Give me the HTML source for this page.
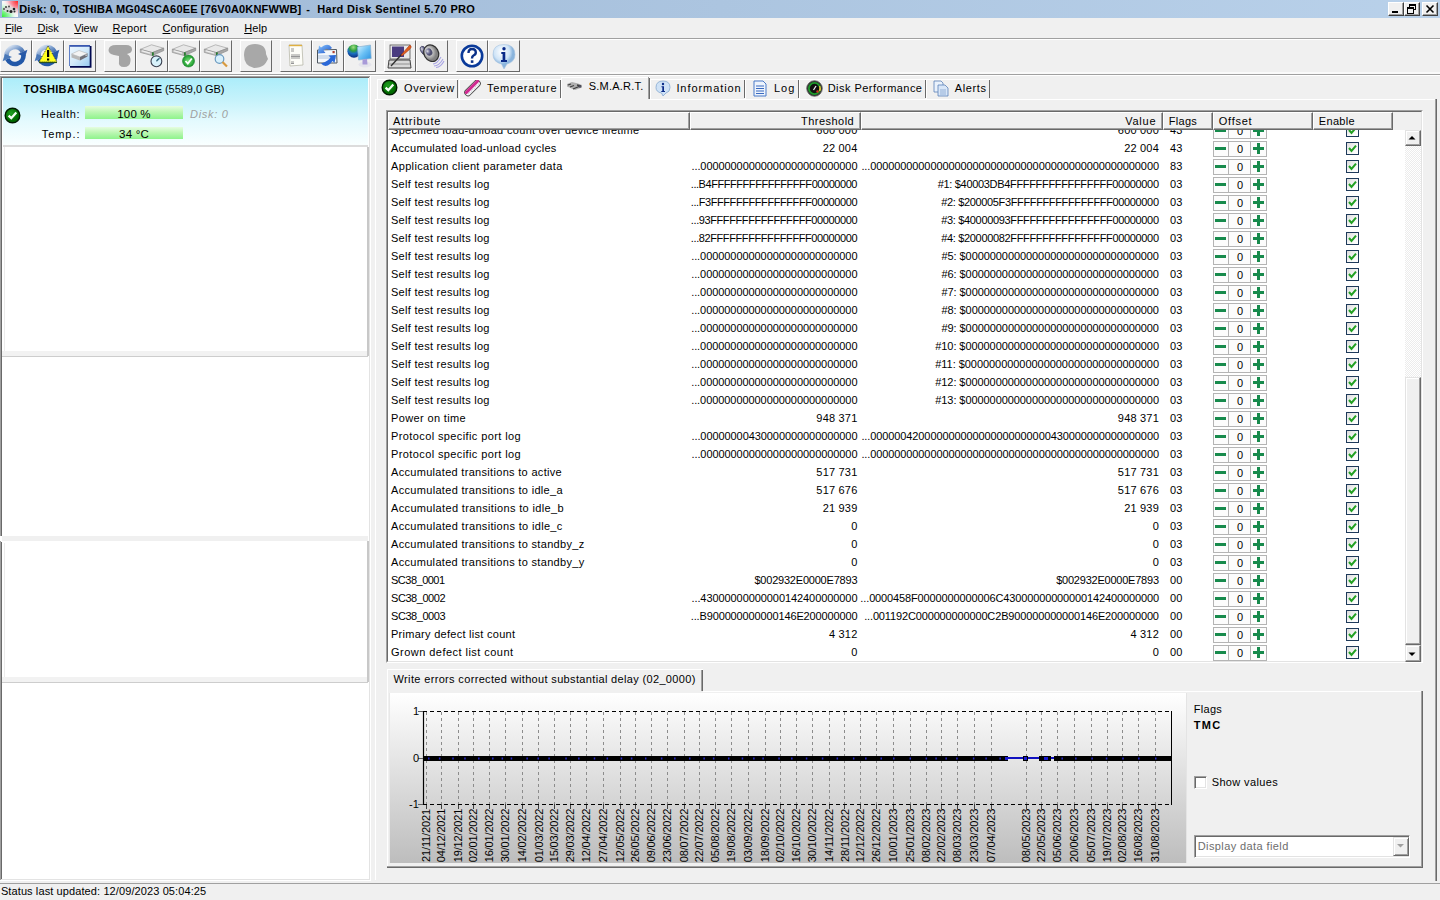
<!DOCTYPE html>
<html><head><meta charset="utf-8">
<style>
*{margin:0;padding:0;box-sizing:border-box}
html,body{width:1440px;height:900px;overflow:hidden;background:#f0f0f0;font-family:"Liberation Sans", sans-serif;font-size:11px;color:#000}
.a{position:absolute}
.t{position:absolute;white-space:nowrap;line-height:13px}
.r{text-align:right}
</style></head><body>

<div class="a" style="left:0;top:0;width:1440px;height:18px;background:linear-gradient(90deg,#9fb9d6,#b9d1ea)"></div>
<svg class="a" style="left:2px;top:1px" width="16" height="16"><defs><radialGradient id="ar" cx="1" cy="0" r="1"><stop offset="0" stop-color="#ff2020"/><stop offset=".5" stop-color="#f8a0b0"/><stop offset="1" stop-color="#fff" stop-opacity="0"/></radialGradient><radialGradient id="ag" cx="0" cy="1" r="1"><stop offset="0" stop-color="#30f030"/><stop offset=".55" stop-color="#b0f4c0"/><stop offset="1" stop-color="#fff" stop-opacity="0"/></radialGradient></defs><rect width="16" height="16" fill="#fafafa"/><rect width="16" height="16" fill="url(#ar)"/><rect width="16" height="16" fill="url(#ag)"/><path d="M1 7 Q4 5 8 6 Q12 6 15.5 8 L14 11 Q10 13 6 12 Q3 11 1 9 Z" fill="#d8d8d8"/><circle cx="4" cy="6" r="1" fill="#404040"/><circle cx="7" cy="5.5" r="1" fill="#505050"/><circle cx="12" cy="8" r="1.3" fill="#202028"/><circle cx="9" cy="10.5" r="1.5" fill="#202020"/><circle cx="5.5" cy="10" r="1" fill="#204020"/><circle cx="12.5" cy="10.5" r="1" fill="#303030"/><circle cx="2" cy="8" r=".9" fill="#404040"/></svg>
<div class="t" style="left:19.2px;top:3px;font-weight:bold;letter-spacing:0.151px">Disk: 0, TOSHIBA MG04SCA60EE [76V0A0KNFWWB]</div>
<div class="t" style="left:306.2px;top:3px;font-weight:bold;letter-spacing:2.328px">-</div>
<div class="t" style="left:317.2px;top:3px;font-weight:bold;letter-spacing:0.353px">Hard Disk Sentinel 5.70 PRO</div>
<div class="a" style="left:1388px;top:2px;width:16px;height:14px;background:#f0f0f0;border-top:1px solid #fff;border-left:1px solid #fff;border-right:1px solid #404040;border-bottom:1px solid #404040;box-shadow:inset -1px -1px 0 #a0a0a0"></div>
<div class="a" style="left:1388px;top:2px;width:16px;height:14px"><div class="a" style="left:4px;top:9px;width:6px;height:2px;background:#000"></div></div>
<div class="a" style="left:1404px;top:2px;width:16px;height:14px;background:#f0f0f0;border-top:1px solid #fff;border-left:1px solid #fff;border-right:1px solid #404040;border-bottom:1px solid #404040;box-shadow:inset -1px -1px 0 #a0a0a0"></div>
<div class="a" style="left:1404px;top:2px;width:16px;height:14px"><div class="a" style="left:5px;top:2px;width:7px;height:6px;border:1px solid #000;border-top-width:2px"></div><div class="a" style="left:3px;top:5px;width:7px;height:7px;border:1px solid #000;border-top-width:2px;background:#f0f0f0"></div></div>
<div class="a" style="left:1422px;top:2px;width:16px;height:14px;background:#f0f0f0;border-top:1px solid #fff;border-left:1px solid #fff;border-right:1px solid #404040;border-bottom:1px solid #404040;box-shadow:inset -1px -1px 0 #a0a0a0"></div>
<div class="a" style="left:1422px;top:2px;width:16px;height:14px"><svg class="a" style="left:0;top:0" width="16" height="14"><path d="M4.5 3.5 L11.5 10.5 M11.5 3.5 L4.5 10.5" stroke="#000" stroke-width="1.6"/></svg></div>
<div class="a" style="left:0;top:18px;width:1440px;height:19px;background:#f0f0f0"></div>
<div class="a" style="left:0;top:38px;width:1440px;height:1px;background:#a0a0a0"></div>
<div class="a" style="left:0;top:39px;width:1440px;height:1px;background:#fff"></div>
<div class="t" style="left:4.9px;top:22px;;letter-spacing:-0.065px"><u>F</u>ile</div>
<div class="t" style="left:37.5px;top:22px;;letter-spacing:-0.021px"><u>D</u>isk</div>
<div class="t" style="left:74.2px;top:22px;;letter-spacing:-0.086px"><u>V</u>iew</div>
<div class="t" style="left:112.5px;top:22px;;letter-spacing:0.197px"><u>R</u>eport</div>
<div class="t" style="left:162.5px;top:22px;;letter-spacing:0.081px"><u>C</u>onfiguration</div>
<div class="t" style="left:244.2px;top:22px;;letter-spacing:0.061px"><u>H</u>elp</div>
<div class="a" style="left:0;top:72px;width:1440px;height:2px;background:#fafafa"></div>
<div class="a" style="left:0;top:74px;width:1440px;height:1px;background:#a0a0a0"></div>
<div class="a" style="left:0;top:75px;width:1440px;height:1px;background:#fff"></div>
<div class="a" style="left:0px;top:40px;width:32px;height:32px;border-top:1px solid #fff;border-left:1px solid #fff;border-right:1px solid #696969;border-bottom:1px solid #696969;background:#f0f0f0"></div>
<div class="a" style="left:32px;top:40px;width:32px;height:32px;border-top:1px solid #fff;border-left:1px solid #fff;border-right:1px solid #696969;border-bottom:1px solid #696969;background:#f0f0f0"></div>
<div class="a" style="left:64px;top:40px;width:32px;height:32px;border-top:1px solid #fff;border-left:1px solid #fff;border-right:1px solid #696969;border-bottom:1px solid #696969;background:#f0f0f0"></div>
<div class="a" style="left:104px;top:40px;width:32px;height:32px;border-top:1px solid #fff;border-left:1px solid #fff;border-right:1px solid #696969;border-bottom:1px solid #696969;background:#f0f0f0"></div>
<div class="a" style="left:136px;top:40px;width:32px;height:32px;border-top:1px solid #fff;border-left:1px solid #fff;border-right:1px solid #696969;border-bottom:1px solid #696969;background:#f0f0f0"></div>
<div class="a" style="left:168px;top:40px;width:32px;height:32px;border-top:1px solid #fff;border-left:1px solid #fff;border-right:1px solid #696969;border-bottom:1px solid #696969;background:#f0f0f0"></div>
<div class="a" style="left:200px;top:40px;width:32px;height:32px;border-top:1px solid #fff;border-left:1px solid #fff;border-right:1px solid #696969;border-bottom:1px solid #696969;background:#f0f0f0"></div>
<div class="a" style="left:240px;top:40px;width:32px;height:32px;border-top:1px solid #fff;border-left:1px solid #fff;border-right:1px solid #696969;border-bottom:1px solid #696969;background:#f0f0f0"></div>
<div class="a" style="left:280px;top:40px;width:32px;height:32px;border-top:1px solid #fff;border-left:1px solid #fff;border-right:1px solid #696969;border-bottom:1px solid #696969;background:#f0f0f0"></div>
<div class="a" style="left:312px;top:40px;width:32px;height:32px;border-top:1px solid #fff;border-left:1px solid #fff;border-right:1px solid #696969;border-bottom:1px solid #696969;background:#f0f0f0"></div>
<div class="a" style="left:344px;top:40px;width:32px;height:32px;border-top:1px solid #fff;border-left:1px solid #fff;border-right:1px solid #696969;border-bottom:1px solid #696969;background:#f0f0f0"></div>
<div class="a" style="left:384px;top:40px;width:32px;height:32px;border-top:1px solid #fff;border-left:1px solid #fff;border-right:1px solid #696969;border-bottom:1px solid #696969;background:#f0f0f0"></div>
<div class="a" style="left:416px;top:40px;width:32px;height:32px;border-top:1px solid #fff;border-left:1px solid #fff;border-right:1px solid #696969;border-bottom:1px solid #696969;background:#f0f0f0"></div>
<div class="a" style="left:456px;top:40px;width:32px;height:32px;border-top:1px solid #fff;border-left:1px solid #fff;border-right:1px solid #696969;border-bottom:1px solid #696969;background:#f0f0f0"></div>
<div class="a" style="left:488px;top:40px;width:32px;height:32px;border-top:1px solid #fff;border-left:1px solid #fff;border-right:1px solid #696969;border-bottom:1px solid #696969;background:#f0f0f0"></div>
<svg class="a" style="left:0px;top:40px" width="32" height="32" viewBox="0 0 32 32"><defs><linearGradient id="rg15" x1="0" y1="0" x2="1" y2="1"><stop offset="0" stop-color="#e4ecf6"/><stop offset=".45" stop-color="#7a9ccc"/><stop offset="1" stop-color="#1a4a98"/></linearGradient></defs><path d="M6.53 16.24 A8.5 8.5 0 0 1 22.70 11.91" stroke="url(#rg15)" stroke-width="4.6" fill="none"/><path d="M27.42 9.71 L25.03 16.89 L17.99 14.11 Z" fill="#2a5aa8"/><path d="M23.47 14.76 A8.5 8.5 0 0 1 7.30 19.09" stroke="#2358a8" stroke-width="4.6" fill="none"/><path d="M2.58 21.29 L4.97 14.11 L12.01 16.89 Z" fill="#4a78b8"/></svg>
<svg class="a" style="left:32px;top:40px" width="32" height="32" viewBox="0 0 32 32"><defs><linearGradient id="rg15" x1="0" y1="0" x2="1" y2="1"><stop offset="0" stop-color="#e4ecf6"/><stop offset=".45" stop-color="#7a9ccc"/><stop offset="1" stop-color="#1a4a98"/></linearGradient></defs><path d="M6.53 16.24 A8.5 8.5 0 0 1 22.70 11.91" stroke="url(#rg15)" stroke-width="4.6" fill="none"/><path d="M27.42 9.71 L25.03 16.89 L17.99 14.11 Z" fill="#2a5aa8"/><path d="M23.47 14.76 A8.5 8.5 0 0 1 7.30 19.09" stroke="#2358a8" stroke-width="4.6" fill="none"/><path d="M2.58 21.29 L4.97 14.11 L12.01 16.89 Z" fill="#4a78b8"/><path d="M16 6 L25 22 L7 22 Z" fill="#ffff20" stroke="#202020" stroke-width=".8" stroke-dasharray="1,1"/>
<rect x="15" y="10" width="2.2" height="7" fill="#000"/><rect x="15" y="18.5" width="2.2" height="2" fill="#000"/><path d="M7 22.5 L25 22.5" stroke="#2a5020" stroke-width="1.2"/></svg>
<svg class="a" style="left:64px;top:40px" width="32" height="32" viewBox="0 0 32 32"><defs><linearGradient id="bx" x1="0" y1="0" x2="1" y2="1"><stop offset="0" stop-color="#f0f8ff"/><stop offset=".5" stop-color="#d4ebfb"/><stop offset="1" stop-color="#94c8f0"/></linearGradient></defs>
<rect x="5" y="5" width="21.5" height="21.5" fill="url(#bx)"/>
<rect x="5" y="5" width="21" height="1.8" fill="#3a58b0"/><rect x="5" y="5" width="1" height="21" fill="#6080c8"/>
<path d="M26.6 6 L26.6 26.8 L6 26.8" stroke="#000850" stroke-width="1.8" fill="none"/>
<path d="M7.5 14 L15 10.5 L23.5 13.5 L16 17 Z" fill="#f4f4f4" stroke="#a8a8a8" stroke-width=".5"/>
<path d="M7.5 14 L16 17 L16 20.5 L7.5 17.5 Z" fill="#b8b8b8"/>
<path d="M16 17 L23.5 13.5 L23.5 16.5 L16 20.5 Z" fill="#707078"/><rect x="21.5" y="14.5" width="1.2" height="1.5" fill="#e0e0e0"/></svg>
<svg class="a" style="left:104px;top:40px" width="32" height="32" viewBox="0 0 32 32"><path d="M4.5 10 Q5 5 12 5 L22 5 Q28 5 28 9.5 Q28 13 23 14 Q27 16 26.5 21 Q26 27 20 27 Q14 27 15 21 L15 16 L10 15 Q4.5 14 4.5 10 Z" fill="#a4a4a4"/></svg>
<svg class="a" style="left:136px;top:40px" width="32" height="32" viewBox="0 0 32 32"><path d="M4.3 9.3 L15.5 4.8 L27.7 8.2 L16.3 12.6 Z" fill="#e8e8e8" stroke="#a0a0a0" stroke-width=".7"/>
<path d="M4.3 9.3 L16.3 12.6 L16.3 15.6 L4.3 12.4 Z" fill="#c4c4c4" stroke="#909090" stroke-width=".7"/>
<path d="M6 10.9 L14 13.1" stroke="#eeeeee" stroke-width="1.1"/>
<path d="M16.3 12.6 L27.7 8.2 L27.7 10.6 L16.3 15.6 Z" fill="#a8a8a8" stroke="#888" stroke-width=".7"/>
<rect x="16" y="12.3" width="1.8" height="3.4" fill="#2a7a30"/><circle cx="20.4" cy="21.3" r="5.4" fill="#d8f2fb" stroke="#3a4050" stroke-width="1.1"/><path d="M20.4 21.3 L23.5 18.3 L21 20" stroke="#3a6a80" stroke-width="1.3" fill="none"/></svg>
<svg class="a" style="left:168px;top:40px" width="32" height="32" viewBox="0 0 32 32"><path d="M4.3 9.3 L15.5 4.8 L27.7 8.2 L16.3 12.6 Z" fill="#e8e8e8" stroke="#a0a0a0" stroke-width=".7"/>
<path d="M4.3 9.3 L16.3 12.6 L16.3 15.6 L4.3 12.4 Z" fill="#c4c4c4" stroke="#909090" stroke-width=".7"/>
<path d="M6 10.9 L14 13.1" stroke="#eeeeee" stroke-width="1.1"/>
<path d="M16.3 12.6 L27.7 8.2 L27.7 10.6 L16.3 15.6 Z" fill="#a8a8a8" stroke="#888" stroke-width=".7"/>
<rect x="16" y="12.3" width="1.8" height="3.4" fill="#2a7a30"/><defs><radialGradient id="gc"><stop offset="0" stop-color="#7ce07c"/><stop offset="1" stop-color="#1a9a2a"/></radialGradient></defs><circle cx="20.5" cy="21" r="6" fill="url(#gc)" stroke="#1a7a2a" stroke-width=".6"/><path d="M17.5 21 L19.8 23.5 L23.8 18.5" stroke="#fff" stroke-width="1.8" fill="none"/></svg>
<svg class="a" style="left:200px;top:40px" width="32" height="32" viewBox="0 0 32 32"><path d="M4.3 9.3 L15.5 4.8 L27.7 8.2 L16.3 12.6 Z" fill="#e8e8e8" stroke="#a0a0a0" stroke-width=".7"/>
<path d="M4.3 9.3 L16.3 12.6 L16.3 15.6 L4.3 12.4 Z" fill="#c4c4c4" stroke="#909090" stroke-width=".7"/>
<path d="M6 10.9 L14 13.1" stroke="#eeeeee" stroke-width="1.1"/>
<path d="M16.3 12.6 L27.7 8.2 L27.7 10.6 L16.3 15.6 Z" fill="#a8a8a8" stroke="#888" stroke-width=".7"/>
<rect x="16" y="12.3" width="1.8" height="3.4" fill="#2a7a30"/><circle cx="19.5" cy="19" r="4.3" fill="#d8f0fc" stroke="#6a9ac0" stroke-width="1.2"/><path d="M22.5 22 L27 26.5" stroke="#d89a40" stroke-width="2.2"/></svg>
<svg class="a" style="left:240px;top:40px" width="32" height="32" viewBox="0 0 32 32"><path d="M4 15 Q4 4 15 4 Q26 4 26 14 L28 19 Q26 23 24 25 Q20 28 14 28 Q4 26 4 15 Z" fill="#a8a8a8"/></svg>
<svg class="a" style="left:280px;top:40px" width="32" height="32" viewBox="0 0 32 32"><path d="M9 5 L22 5 L23 25 L10 26 Z" fill="#fdfdf8" stroke="#b0b0a0" stroke-width=".7"/><path d="M9 5.5 L22 5.5" stroke="#e0b040" stroke-width="1.4"/>
<path d="M11 9 L14 9 M11 11 L14 11 M11 15 L20 15 M11 16.5 L20 16.5 M11 18 L20 18 M11 22 L14 22 M11 23.5 L14 23.5" stroke="#8a8a8a" stroke-width=".9"/></svg>
<svg class="a" style="left:312px;top:40px" width="32" height="32" viewBox="0 0 32 32"><defs><linearGradient id="ma" x1="0" y1="0" x2="1" y2="1"><stop offset="0" stop-color="#8ac8ff"/><stop offset="1" stop-color="#1a50c8"/></linearGradient></defs>
<path d="M5.5 10 L24.5 9.5 L25 23 L5.5 23 Z" fill="#f4f8fc" stroke="#505860" stroke-width="1"/><path d="M6 17 L24 17" stroke="#d0dcec" stroke-width="4"/>
<rect x="20.5" y="11" width="2.2" height="2.2" fill="#b04030"/>
<path d="M20 8 Q17 3 12 5.5 L9 7.5 L7 5.5 L6 13.5 L13.5 13 L11.5 10.5 Q15 8 17 10 Z" fill="url(#ma)"/>
<path d="M9 23.5 Q13 28 18 24 L20.5 21 L22.5 23 L24 15 L16.5 15.5 L18.5 17.5 Q16 21 13 22 Z" fill="#2a68d8"/></svg>
<svg class="a" style="left:344px;top:40px" width="32" height="32" viewBox="0 0 32 32"><defs><radialGradient id="gl" cx=".45" cy=".2" r=".8"><stop offset="0" stop-color="#a0e080"/><stop offset=".35" stop-color="#30a040"/><stop offset=".6" stop-color="#1a70c0"/><stop offset="1" stop-color="#0a2a80"/></radialGradient><linearGradient id="mn" x1="0" y1="0" x2="1" y2="1"><stop offset="0" stop-color="#d8f4ff"/><stop offset=".5" stop-color="#6ac0f4"/><stop offset="1" stop-color="#2a90e0"/></linearGradient></defs>
<circle cx="10" cy="11.2" r="6.6" fill="url(#gl)"/>
<path d="M13.5 7 L26.5 5 L27.2 18.5 L14.5 20 Z" fill="url(#mn)" stroke="#8ab0d0" stroke-width=".7"/>
<ellipse cx="21" cy="24.5" rx="6.5" ry="3" fill="#e4e4ec"/><path d="M18.5 19.5 L23 19 L23.5 24.5 L18.5 24.5 Z" fill="#a89ad8"/></svg>
<svg class="a" style="left:384px;top:40px" width="32" height="32" viewBox="0 0 32 32"><rect x="6" y="5" width="20" height="14" fill="#e8e8e8" stroke="#505050" stroke-width=".8"/><rect x="8" y="6.5" width="12" height="10.5" fill="#4a3c80"/>
<path d="M5 20 L26 20 L27 28 L4 28 Z" fill="#d8d8d8" stroke="#303030" stroke-width=".9"/><path d="M5 24 L26 24" stroke="#808080" stroke-width=".8"/>
<path d="M7 26 L18 14" stroke="#303030" stroke-width="1.3"/><path d="M17 15 L24 7 Q26 4 27 6 Q28 7 25 10 L18 16 Z" fill="#e06020" stroke="#a03010" stroke-width=".5"/></svg>
<svg class="a" style="left:416px;top:40px" width="32" height="32" viewBox="0 0 32 32"><defs><radialGradient id="sp" cx=".4" cy=".35"><stop offset="0" stop-color="#f4f4f4"/><stop offset=".6" stop-color="#b8b8b8"/><stop offset="1" stop-color="#808080"/></radialGradient><radialGradient id="sp2" cx=".35" cy=".3"><stop offset="0" stop-color="#e0e0e0"/><stop offset=".6" stop-color="#7a7aa0"/><stop offset="1" stop-color="#505070"/></radialGradient></defs>
<ellipse cx="7.3" cy="10.3" rx="2.6" ry="4.3" transform="rotate(-25 7.3 10.3)" fill="url(#sp2)" stroke="#404060" stroke-width=".7"/>
<path d="M17 24 Q21 24 25 17 M18 26 Q23 26 27 19 M20 27.5 Q25 27 28 21" stroke="#a8a4e4" stroke-width="1.1" fill="none"/>
<ellipse cx="15.2" cy="13.2" rx="7.2" ry="8.6" transform="rotate(-30 15.2 13.2)" fill="url(#sp)" stroke="#303030" stroke-width="1.2"/>
<ellipse cx="13" cy="12" rx="3.2" ry="3.8" transform="rotate(-30 13 12)" fill="url(#sp2)"/></svg>
<svg class="a" style="left:456px;top:40px" width="32" height="32" viewBox="0 0 32 32"><circle cx="16" cy="16" r="10.2" fill="#fff" stroke="#0a3a9a" stroke-width="2.6"/>
<path d="M12.5 13 Q12.5 9 16 9 Q19.8 9 19.8 12.5 Q19.8 14.5 17.5 15.5 Q16 16.3 16 18.5" stroke="#0a3088" stroke-width="2.4" fill="none"/><rect x="14.8" y="20.3" width="2.6" height="2.6" fill="#0a3088"/></svg>
<svg class="a" style="left:488px;top:40px" width="32" height="32" viewBox="0 0 32 32"><defs><radialGradient id="bb" cx=".4" cy=".3"><stop offset="0" stop-color="#fff"/><stop offset=".7" stop-color="#cfe4f7"/><stop offset="1" stop-color="#8ab4dc"/></radialGradient></defs>
<path d="M16 4.5 Q27 4.5 27 14.5 Q27 22 19 24 L16 29 L13.5 24 Q5 22 5 14.5 Q5 4.5 16 4.5 Z" fill="url(#bb)" stroke="#a8c4e0" stroke-width=".6"/>
<circle cx="16" cy="8.8" r="1.7" fill="#0a2a88"/><path d="M13.3 12 L17.3 12 L17.3 20 L19 20 L19 22 L13 22 L13 20 L14.6 20 L14.6 14 L13.3 14 Z" fill="#0a2a88"/></svg>
<div class="a" style="left:0;top:76px;width:370px;height:803px;background:#fff"></div>
<div class="a" style="left:0;top:76px;width:1px;height:460px;background:#a0a0a0"></div>
<div class="a" style="left:1px;top:77px;width:1px;height:459px;background:#696969"></div>
<div class="a" style="left:0;top:541px;width:1px;height:339px;background:#a0a0a0"></div>
<div class="a" style="left:1px;top:542px;width:1px;height:338px;background:#696969"></div>
<div class="a" style="left:0;top:76px;width:370px;height:1px;background:#a0a0a0"></div>
<div class="a" style="left:1px;top:77px;width:368px;height:1px;background:#696969"></div>
<div class="a" style="left:369px;top:77px;width:1px;height:803px;background:#e3e3e3"></div>
<div class="a" style="left:370px;top:76px;width:1px;height:805px;background:#fff"></div>
<div class="a" style="left:1px;top:879px;width:369px;height:1px;background:#e3e3e3"></div>
<div class="a" style="left:0px;top:880px;width:371px;height:1px;background:#fff"></div>
<div class="a" style="left:3px;top:78px;width:365px;height:67px;background:linear-gradient(180deg,#acedfa 0%,#c8f3fb 35%,#e4fafe 65%,#f9ffff 100%)"></div>
<div class="a" style="left:3px;top:145px;width:365px;height:2px;background:#dcdcdc"></div>
<div class="t" style="left:23.4px;top:83px;font-weight:bold;letter-spacing:0.364px">TOSHIBA MG04SCA60EE</div>
<div class="t" style="left:165.0px;top:83px;;letter-spacing:-0.042px">(5589,0 GB)</div>
<svg class="a" style="left:4px;top:107px" width="17" height="17" viewBox="0 0 17 17"><defs><radialGradient id="ck0" cx=".4" cy=".35"><stop offset="0" stop-color="#20a020"/><stop offset="1" stop-color="#006a00"/></radialGradient></defs>
<circle cx="8.5" cy="8.5" r="7.3" fill="url(#ck0)" stroke="#001a00" stroke-width="1.4"/><path d="M4.6 8.6 L7.3 11.2 L12.3 5.6" stroke="#f4fff4" stroke-width="2.3" fill="none"/></svg>
<div class="t" style="left:40.9px;top:108px;;letter-spacing:0.623px">Health:</div>
<div class="t" style="left:41.7px;top:128px;;letter-spacing:0.957px">Temp.:</div>
<div class="a" style="left:85px;top:106px;width:98px;height:13px;background:linear-gradient(180deg,#e6fde0 0%,#bdf7b4 45%,#8ef38c 100%)"></div>
<div class="a" style="left:85px;top:127px;width:98px;height:12px;background:linear-gradient(180deg,#e6fde0 0%,#bdf7b4 45%,#8ef38c 100%)"></div>
<div class="t" style="left:85px;top:108px;width:98px;text-align:center;letter-spacing:0.2px;font-size:11.5px">100 %</div>
<div class="t" style="left:85px;top:128px;width:98px;text-align:center;letter-spacing:0.2px;font-size:11.5px">34 °C</div>
<div class="t" style="left:190.0px;top:108px;font-style:italic;color:#a0a0a0;letter-spacing:0.712px">Disk: 0</div>
<div class="a" style="left:2px;top:351px;width:366px;height:5px;background:#f2f2f2"></div>
<div class="a" style="left:2px;top:356px;width:366px;height:1px;background:#cdcdcd"></div>
<div class="a" style="left:2px;top:536px;width:366px;height:5px;background:#f0f0f0"></div>
<div class="a" style="left:2px;top:677px;width:366px;height:5px;background:#f2f2f2"></div>
<div class="a" style="left:2px;top:682px;width:366px;height:1px;background:#cdcdcd"></div>
<div class="a" style="left:4px;top:147px;width:1px;height:204px;background:#ececec"></div>
<div class="a" style="left:4px;top:543px;width:1px;height:134px;background:#ececec"></div>
<div class="a" style="left:367px;top:147px;width:2px;height:209px;background:#c8c8c8"></div>
<div class="a" style="left:367px;top:541px;width:2px;height:141px;background:#c8c8c8"></div>
<div class="a" style="left:375px;top:99px;width:1px;height:781px;background:#fff"></div>
<div class="a" style="left:375px;top:99px;width:1061px;height:1px;background:#fff"></div>
<div class="a" style="left:1436px;top:99px;width:1px;height:782px;background:#696969"></div>
<div class="a" style="left:1435px;top:99px;width:1px;height:782px;background:#a0a0a0"></div>
<div class="a" style="left:0;top:883px;width:1440px;height:1px;background:#a0a0a0"></div>
<div class="a" style="left:0;top:884px;width:1440px;height:16px;background:#f0f0f0"></div>
<div class="t" style="left:0.9px;top:885px;;letter-spacing:0.105px">Status last updated: 12/09/2023 05:04:25</div>
<div class="a" style="left:377px;top:79px;width:81px;height:20px;border-top:1px solid #fff;border-left:1px solid #fff"></div>
<div class="a" style="left:457px;top:80px;width:1px;height:18px;background:#696969"></div>
<div class="t" style="left:404.0px;top:82px;;letter-spacing:0.608px">Overview</div>
<div class="a" style="left:459px;top:79px;width:102px;height:20px;border-top:1px solid #fff;border-left:1px solid #fff"></div>
<div class="a" style="left:560px;top:80px;width:1px;height:18px;background:#696969"></div>
<div class="t" style="left:486.9px;top:82px;;letter-spacing:0.793px">Temperature</div>
<div class="a" style="left:561px;top:77px;width:89px;height:23px;background:#f0f0f0;border-top:1px solid #fff;border-left:1px solid #fff"></div>
<div class="a" style="left:648px;top:77px;width:1px;height:22px;background:#a0a0a0"></div>
<div class="a" style="left:649px;top:78px;width:1px;height:21px;background:#696969"></div>
<div class="t" style="left:588.7px;top:80px;;letter-spacing:0.238px">S.M.A.R.T.</div>
<div class="a" style="left:650px;top:79px;width:95px;height:20px;border-top:1px solid #fff;border-left:1px solid #fff"></div>
<div class="a" style="left:744px;top:80px;width:1px;height:18px;background:#696969"></div>
<div class="t" style="left:676.4px;top:82px;;letter-spacing:0.927px">Information</div>
<div class="a" style="left:745px;top:79px;width:54px;height:20px;border-top:1px solid #fff;border-left:1px solid #fff"></div>
<div class="a" style="left:798px;top:80px;width:1px;height:18px;background:#696969"></div>
<div class="t" style="left:773.9px;top:82px;;letter-spacing:1.070px">Log</div>
<div class="a" style="left:799px;top:79px;width:127px;height:20px;border-top:1px solid #fff;border-left:1px solid #fff"></div>
<div class="a" style="left:925px;top:80px;width:1px;height:18px;background:#696969"></div>
<div class="t" style="left:827.7px;top:82px;;letter-spacing:0.459px">Disk Performance</div>
<div class="a" style="left:926px;top:79px;width:64px;height:20px;border-top:1px solid #fff;border-left:1px solid #fff"></div>
<div class="a" style="left:989px;top:80px;width:1px;height:18px;background:#696969"></div>
<div class="t" style="left:954.8px;top:82px;;letter-spacing:0.595px">Alerts</div>
<svg class="a" style="left:381px;top:79px" width="17" height="17" viewBox="0 0 17 17"><defs><radialGradient id="ck1" cx=".4" cy=".35"><stop offset="0" stop-color="#20a020"/><stop offset="1" stop-color="#006a00"/></radialGradient></defs>
<circle cx="8.5" cy="8.5" r="7.3" fill="url(#ck1)" stroke="#001a00" stroke-width="1.4"/><path d="M4.6 8.6 L7.3 11.2 L12.3 5.6" stroke="#f4fff4" stroke-width="2.3" fill="none"/></svg>
<svg class="a" style="left:464px;top:80px" width="17" height="17"><g transform="rotate(-45 8.5 8)"><rect x="-1" y="4.8" width="19" height="6.4" rx="2.8" fill="#fff" stroke="#505050" stroke-width="1"/><rect x="-0.5" y="5.3" width="19" height="3" rx="1.3" fill="#d02a90"/><path d="M1 9.3 L17 9.3" stroke="#b8b8c8" stroke-width="1" stroke-dasharray="1,1"/></g></svg>
<svg class="a" style="left:566px;top:81px" width="18" height="10"><path d="M1 3 L6 1 L12 2.5 L16 4 L16 6.5 L9 9 L1 5.5 Z" fill="#b0b0b0"/><path d="M2 4 L5 3 M4 6 L8 4.5 M7 8 L13 5.5 M11 4 L15 5" stroke="#404040" stroke-width="1.3"/><circle cx="14" cy="5.5" r="1.3" fill="#505060"/></svg>
<svg class="a" style="left:655px;top:80px" width="17" height="17"><path d="M8 1 Q15 1 15 7.5 Q15 12 11 13 L8 16 L6.5 13 Q1 12 1 7.5 Q1 1 8 1 Z" fill="#cfe2f6" stroke="#7aa0cc" stroke-width=".7"/><circle cx="8" cy="4" r="1.2" fill="#0a2a88"/><path d="M6.5 6.2 L9 6.2 L9 11 L10 11 L10 12 L6.3 12 L6.3 11 L7.3 11 L7.3 7.2 L6.5 7.2 Z" fill="#0a2a88"/></svg>
<svg class="a" style="left:752px;top:80px" width="16" height="17"><path d="M2 1 L11 1 L14 4 L14 16 L2 16 Z" fill="#eef4fc" stroke="#4a7ac8" stroke-width="1"/><path d="M4 6 L12 6 M4 8.5 L12 8.5 M4 11 L12 11 M4 13.5 L12 13.5" stroke="#3a6ac0" stroke-width="1"/></svg>
<svg class="a" style="left:806px;top:80px" width="17" height="17"><circle cx="8.5" cy="8.5" r="7.8" fill="#303030" stroke="#606060" stroke-width=".8"/><circle cx="8.5" cy="8.5" r="5.6" fill="#101010" stroke="#1c9a2a" stroke-width="1.8"/><path d="M13.6 6 A5.6 5.6 0 0 1 13.6 11" stroke="#e0c030" stroke-width="1.6" fill="none"/><path d="M7.5 10 L10 6" stroke="#f0f0f0" stroke-width="1.3"/><circle cx="11.5" cy="11.5" r="1.2" fill="#d03020"/></svg>
<svg class="a" style="left:933px;top:80px" width="16" height="17"><path d="M1 1 L8 1 L10 3 L10 12 L1 12 Z" fill="#eaf2fc" stroke="#5a80b8" stroke-width=".8"/><path d="M5 5 L12 5 L15 8 L15 16 L5 16 Z" fill="#d8e6f8" stroke="#5a80b8" stroke-width=".8"/><path d="M7 10 L13 10 M7 12 L13 12 M7 14 L13 14" stroke="#7a9ac8" stroke-width=".7"/></svg>
<div class="a" style="left:386px;top:110px;width:1037px;height:553px;background:#fff;border-top:1px solid #a0a0a0;border-left:1px solid #a0a0a0;border-right:1px solid #fff;border-bottom:1px solid #fff"></div>
<div class="a" style="left:387px;top:111px;width:1035px;height:551px;border-top:1px solid #696969;border-left:1px solid #696969;border-right:1px solid #e3e3e3;border-bottom:1px solid #e3e3e3"></div>
<div class="a" style="left:388px;top:129px;width:1017px;height:532px;overflow:hidden">
<div class="t" style="left:3.0px;top:-5px;letter-spacing:0.322px">Specified load-unload count over device lifetime</div>
<div class="t r" style="right:547.5px;top:-5px;letter-spacing:0.2px">600 000</div>
<div class="t r" style="right:246.0px;top:-5px;letter-spacing:0.2px">600 000</div>
<div class="t" style="left:782px;top:-5px;letter-spacing:0.2px">43</div>
<div class="a" style="left:825px;top:-6px;width:54px;height:16px;border:1px solid #b4b4b4;background:#fcfcfc"></div>
<div class="a" style="left:840px;top:-6px;width:1px;height:16px;background:#b4b4b4"></div>
<div class="a" style="left:862px;top:-6px;width:1px;height:16px;background:#b4b4b4"></div>
<div class="a" style="left:827px;top:0px;width:11px;height:3px;background:#178a4c"></div>
<div class="a" style="left:865px;top:0px;width:11px;height:3px;background:#178a4c"></div>
<div class="a" style="left:869px;top:-4px;width:3px;height:11px;background:#178a4c"></div>
<div class="t" style="left:841.5px;top:-4px;width:21px;text-align:center">0</div>
<div class="a" style="left:958px;top:-5px;width:13px;height:13px;border:1px solid #1e3a5a;background:linear-gradient(135deg,#dcdcdc,#f8f8f8 60%,#fff)"></div>
<svg class="a" style="left:958px;top:-5px" width="13" height="13"><path d="M3 6 L5.5 9 L10 3.6" stroke="#22a022" stroke-width="2" fill="none"/></svg>
<div class="t" style="left:3.0px;top:13px;letter-spacing:0.260px">Accumulated load-unload cycles</div>
<div class="t r" style="right:547.5px;top:13px;letter-spacing:0.2px">22 004</div>
<div class="t r" style="right:246.0px;top:13px;letter-spacing:0.2px">22 004</div>
<div class="t" style="left:782px;top:13px;letter-spacing:0.2px">43</div>
<div class="a" style="left:825px;top:12px;width:54px;height:16px;border:1px solid #b4b4b4;background:#fcfcfc"></div>
<div class="a" style="left:840px;top:12px;width:1px;height:16px;background:#b4b4b4"></div>
<div class="a" style="left:862px;top:12px;width:1px;height:16px;background:#b4b4b4"></div>
<div class="a" style="left:827px;top:18px;width:11px;height:3px;background:#178a4c"></div>
<div class="a" style="left:865px;top:18px;width:11px;height:3px;background:#178a4c"></div>
<div class="a" style="left:869px;top:14px;width:3px;height:11px;background:#178a4c"></div>
<div class="t" style="left:841.5px;top:14px;width:21px;text-align:center">0</div>
<div class="a" style="left:958px;top:13px;width:13px;height:13px;border:1px solid #1e3a5a;background:linear-gradient(135deg,#dcdcdc,#f8f8f8 60%,#fff)"></div>
<svg class="a" style="left:958px;top:13px" width="13" height="13"><path d="M3 6 L5.5 9 L10 3.6" stroke="#22a022" stroke-width="2" fill="none"/></svg>
<div class="t" style="left:3.0px;top:31px;letter-spacing:0.346px">Application client parameter data</div>
<div class="t r" style="right:547.58px;top:31px;letter-spacing:-0.077px">...00000000000000000000000000</div>
<div class="t r" style="right:246.10px;top:31px;letter-spacing:-0.104px">...000000000000000000000000000000000000000000000000</div>
<div class="t" style="left:782px;top:31px;letter-spacing:0.2px">83</div>
<div class="a" style="left:825px;top:30px;width:54px;height:16px;border:1px solid #b4b4b4;background:#fcfcfc"></div>
<div class="a" style="left:840px;top:30px;width:1px;height:16px;background:#b4b4b4"></div>
<div class="a" style="left:862px;top:30px;width:1px;height:16px;background:#b4b4b4"></div>
<div class="a" style="left:827px;top:36px;width:11px;height:3px;background:#178a4c"></div>
<div class="a" style="left:865px;top:36px;width:11px;height:3px;background:#178a4c"></div>
<div class="a" style="left:869px;top:32px;width:3px;height:11px;background:#178a4c"></div>
<div class="t" style="left:841.5px;top:32px;width:21px;text-align:center">0</div>
<div class="a" style="left:958px;top:31px;width:13px;height:13px;border:1px solid #1e3a5a;background:linear-gradient(135deg,#dcdcdc,#f8f8f8 60%,#fff)"></div>
<svg class="a" style="left:958px;top:31px" width="13" height="13"><path d="M3 6 L5.5 9 L10 3.6" stroke="#22a022" stroke-width="2" fill="none"/></svg>
<div class="t" style="left:3.0px;top:49px;letter-spacing:0.278px">Self test results log</div>
<div class="t r" style="right:547.94px;top:49px;letter-spacing:-0.441px">...B4FFFFFFFFFFFFFFFF00000000</div>
<div class="t r" style="right:246.32px;top:49px;letter-spacing:-0.324px">#1: $40003DB4FFFFFFFFFFFFFFFF00000000</div>
<div class="t" style="left:782px;top:49px;letter-spacing:0.2px">03</div>
<div class="a" style="left:825px;top:48px;width:54px;height:16px;border:1px solid #b4b4b4;background:#fcfcfc"></div>
<div class="a" style="left:840px;top:48px;width:1px;height:16px;background:#b4b4b4"></div>
<div class="a" style="left:862px;top:48px;width:1px;height:16px;background:#b4b4b4"></div>
<div class="a" style="left:827px;top:54px;width:11px;height:3px;background:#178a4c"></div>
<div class="a" style="left:865px;top:54px;width:11px;height:3px;background:#178a4c"></div>
<div class="a" style="left:869px;top:50px;width:3px;height:11px;background:#178a4c"></div>
<div class="t" style="left:841.5px;top:50px;width:21px;text-align:center">0</div>
<div class="a" style="left:958px;top:49px;width:13px;height:13px;border:1px solid #1e3a5a;background:linear-gradient(135deg,#dcdcdc,#f8f8f8 60%,#fff)"></div>
<svg class="a" style="left:958px;top:49px" width="13" height="13"><path d="M3 6 L5.5 9 L10 3.6" stroke="#22a022" stroke-width="2" fill="none"/></svg>
<div class="t" style="left:3.0px;top:67px;letter-spacing:0.278px">Self test results log</div>
<div class="t r" style="right:547.92px;top:67px;letter-spacing:-0.420px">...F3FFFFFFFFFFFFFFFF00000000</div>
<div class="t r" style="right:246.35px;top:67px;letter-spacing:-0.353px">#2: $200005F3FFFFFFFFFFFFFFFF00000000</div>
<div class="t" style="left:782px;top:67px;letter-spacing:0.2px">03</div>
<div class="a" style="left:825px;top:66px;width:54px;height:16px;border:1px solid #b4b4b4;background:#fcfcfc"></div>
<div class="a" style="left:840px;top:66px;width:1px;height:16px;background:#b4b4b4"></div>
<div class="a" style="left:862px;top:66px;width:1px;height:16px;background:#b4b4b4"></div>
<div class="a" style="left:827px;top:72px;width:11px;height:3px;background:#178a4c"></div>
<div class="a" style="left:865px;top:72px;width:11px;height:3px;background:#178a4c"></div>
<div class="a" style="left:869px;top:68px;width:3px;height:11px;background:#178a4c"></div>
<div class="t" style="left:841.5px;top:68px;width:21px;text-align:center">0</div>
<div class="a" style="left:958px;top:67px;width:13px;height:13px;border:1px solid #1e3a5a;background:linear-gradient(135deg,#dcdcdc,#f8f8f8 60%,#fff)"></div>
<svg class="a" style="left:958px;top:67px" width="13" height="13"><path d="M3 6 L5.5 9 L10 3.6" stroke="#22a022" stroke-width="2" fill="none"/></svg>
<div class="t" style="left:3.0px;top:85px;letter-spacing:0.278px">Self test results log</div>
<div class="t r" style="right:547.90px;top:85px;letter-spacing:-0.399px">...93FFFFFFFFFFFFFFFF00000000</div>
<div class="t r" style="right:246.34px;top:85px;letter-spacing:-0.337px">#3: $40000093FFFFFFFFFFFFFFFF00000000</div>
<div class="t" style="left:782px;top:85px;letter-spacing:0.2px">03</div>
<div class="a" style="left:825px;top:84px;width:54px;height:16px;border:1px solid #b4b4b4;background:#fcfcfc"></div>
<div class="a" style="left:840px;top:84px;width:1px;height:16px;background:#b4b4b4"></div>
<div class="a" style="left:862px;top:84px;width:1px;height:16px;background:#b4b4b4"></div>
<div class="a" style="left:827px;top:90px;width:11px;height:3px;background:#178a4c"></div>
<div class="a" style="left:865px;top:90px;width:11px;height:3px;background:#178a4c"></div>
<div class="a" style="left:869px;top:86px;width:3px;height:11px;background:#178a4c"></div>
<div class="t" style="left:841.5px;top:86px;width:21px;text-align:center">0</div>
<div class="a" style="left:958px;top:85px;width:13px;height:13px;border:1px solid #1e3a5a;background:linear-gradient(135deg,#dcdcdc,#f8f8f8 60%,#fff)"></div>
<svg class="a" style="left:958px;top:85px" width="13" height="13"><path d="M3 6 L5.5 9 L10 3.6" stroke="#22a022" stroke-width="2" fill="none"/></svg>
<div class="t" style="left:3.0px;top:103px;letter-spacing:0.278px">Self test results log</div>
<div class="t r" style="right:547.90px;top:103px;letter-spacing:-0.399px">...82FFFFFFFFFFFFFFFF00000000</div>
<div class="t r" style="right:246.34px;top:103px;letter-spacing:-0.337px">#4: $20000082FFFFFFFFFFFFFFFF00000000</div>
<div class="t" style="left:782px;top:103px;letter-spacing:0.2px">03</div>
<div class="a" style="left:825px;top:102px;width:54px;height:16px;border:1px solid #b4b4b4;background:#fcfcfc"></div>
<div class="a" style="left:840px;top:102px;width:1px;height:16px;background:#b4b4b4"></div>
<div class="a" style="left:862px;top:102px;width:1px;height:16px;background:#b4b4b4"></div>
<div class="a" style="left:827px;top:108px;width:11px;height:3px;background:#178a4c"></div>
<div class="a" style="left:865px;top:108px;width:11px;height:3px;background:#178a4c"></div>
<div class="a" style="left:869px;top:104px;width:3px;height:11px;background:#178a4c"></div>
<div class="t" style="left:841.5px;top:104px;width:21px;text-align:center">0</div>
<div class="a" style="left:958px;top:103px;width:13px;height:13px;border:1px solid #1e3a5a;background:linear-gradient(135deg,#dcdcdc,#f8f8f8 60%,#fff)"></div>
<svg class="a" style="left:958px;top:103px" width="13" height="13"><path d="M3 6 L5.5 9 L10 3.6" stroke="#22a022" stroke-width="2" fill="none"/></svg>
<div class="t" style="left:3.0px;top:121px;letter-spacing:0.278px">Self test results log</div>
<div class="t r" style="right:547.57px;top:121px;letter-spacing:-0.067px">...00000000000000000000000000</div>
<div class="t r" style="right:246.08px;top:121px;letter-spacing:-0.077px">#5: $00000000000000000000000000000000</div>
<div class="t" style="left:782px;top:121px;letter-spacing:0.2px">03</div>
<div class="a" style="left:825px;top:120px;width:54px;height:16px;border:1px solid #b4b4b4;background:#fcfcfc"></div>
<div class="a" style="left:840px;top:120px;width:1px;height:16px;background:#b4b4b4"></div>
<div class="a" style="left:862px;top:120px;width:1px;height:16px;background:#b4b4b4"></div>
<div class="a" style="left:827px;top:126px;width:11px;height:3px;background:#178a4c"></div>
<div class="a" style="left:865px;top:126px;width:11px;height:3px;background:#178a4c"></div>
<div class="a" style="left:869px;top:122px;width:3px;height:11px;background:#178a4c"></div>
<div class="t" style="left:841.5px;top:122px;width:21px;text-align:center">0</div>
<div class="a" style="left:958px;top:121px;width:13px;height:13px;border:1px solid #1e3a5a;background:linear-gradient(135deg,#dcdcdc,#f8f8f8 60%,#fff)"></div>
<svg class="a" style="left:958px;top:121px" width="13" height="13"><path d="M3 6 L5.5 9 L10 3.6" stroke="#22a022" stroke-width="2" fill="none"/></svg>
<div class="t" style="left:3.0px;top:139px;letter-spacing:0.278px">Self test results log</div>
<div class="t r" style="right:547.57px;top:139px;letter-spacing:-0.067px">...00000000000000000000000000</div>
<div class="t r" style="right:246.08px;top:139px;letter-spacing:-0.077px">#6: $00000000000000000000000000000000</div>
<div class="t" style="left:782px;top:139px;letter-spacing:0.2px">03</div>
<div class="a" style="left:825px;top:138px;width:54px;height:16px;border:1px solid #b4b4b4;background:#fcfcfc"></div>
<div class="a" style="left:840px;top:138px;width:1px;height:16px;background:#b4b4b4"></div>
<div class="a" style="left:862px;top:138px;width:1px;height:16px;background:#b4b4b4"></div>
<div class="a" style="left:827px;top:144px;width:11px;height:3px;background:#178a4c"></div>
<div class="a" style="left:865px;top:144px;width:11px;height:3px;background:#178a4c"></div>
<div class="a" style="left:869px;top:140px;width:3px;height:11px;background:#178a4c"></div>
<div class="t" style="left:841.5px;top:140px;width:21px;text-align:center">0</div>
<div class="a" style="left:958px;top:139px;width:13px;height:13px;border:1px solid #1e3a5a;background:linear-gradient(135deg,#dcdcdc,#f8f8f8 60%,#fff)"></div>
<svg class="a" style="left:958px;top:139px" width="13" height="13"><path d="M3 6 L5.5 9 L10 3.6" stroke="#22a022" stroke-width="2" fill="none"/></svg>
<div class="t" style="left:3.0px;top:157px;letter-spacing:0.278px">Self test results log</div>
<div class="t r" style="right:547.57px;top:157px;letter-spacing:-0.067px">...00000000000000000000000000</div>
<div class="t r" style="right:246.08px;top:157px;letter-spacing:-0.077px">#7: $00000000000000000000000000000000</div>
<div class="t" style="left:782px;top:157px;letter-spacing:0.2px">03</div>
<div class="a" style="left:825px;top:156px;width:54px;height:16px;border:1px solid #b4b4b4;background:#fcfcfc"></div>
<div class="a" style="left:840px;top:156px;width:1px;height:16px;background:#b4b4b4"></div>
<div class="a" style="left:862px;top:156px;width:1px;height:16px;background:#b4b4b4"></div>
<div class="a" style="left:827px;top:162px;width:11px;height:3px;background:#178a4c"></div>
<div class="a" style="left:865px;top:162px;width:11px;height:3px;background:#178a4c"></div>
<div class="a" style="left:869px;top:158px;width:3px;height:11px;background:#178a4c"></div>
<div class="t" style="left:841.5px;top:158px;width:21px;text-align:center">0</div>
<div class="a" style="left:958px;top:157px;width:13px;height:13px;border:1px solid #1e3a5a;background:linear-gradient(135deg,#dcdcdc,#f8f8f8 60%,#fff)"></div>
<svg class="a" style="left:958px;top:157px" width="13" height="13"><path d="M3 6 L5.5 9 L10 3.6" stroke="#22a022" stroke-width="2" fill="none"/></svg>
<div class="t" style="left:3.0px;top:175px;letter-spacing:0.278px">Self test results log</div>
<div class="t r" style="right:547.57px;top:175px;letter-spacing:-0.067px">...00000000000000000000000000</div>
<div class="t r" style="right:246.08px;top:175px;letter-spacing:-0.077px">#8: $00000000000000000000000000000000</div>
<div class="t" style="left:782px;top:175px;letter-spacing:0.2px">03</div>
<div class="a" style="left:825px;top:174px;width:54px;height:16px;border:1px solid #b4b4b4;background:#fcfcfc"></div>
<div class="a" style="left:840px;top:174px;width:1px;height:16px;background:#b4b4b4"></div>
<div class="a" style="left:862px;top:174px;width:1px;height:16px;background:#b4b4b4"></div>
<div class="a" style="left:827px;top:180px;width:11px;height:3px;background:#178a4c"></div>
<div class="a" style="left:865px;top:180px;width:11px;height:3px;background:#178a4c"></div>
<div class="a" style="left:869px;top:176px;width:3px;height:11px;background:#178a4c"></div>
<div class="t" style="left:841.5px;top:176px;width:21px;text-align:center">0</div>
<div class="a" style="left:958px;top:175px;width:13px;height:13px;border:1px solid #1e3a5a;background:linear-gradient(135deg,#dcdcdc,#f8f8f8 60%,#fff)"></div>
<svg class="a" style="left:958px;top:175px" width="13" height="13"><path d="M3 6 L5.5 9 L10 3.6" stroke="#22a022" stroke-width="2" fill="none"/></svg>
<div class="t" style="left:3.0px;top:193px;letter-spacing:0.278px">Self test results log</div>
<div class="t r" style="right:547.57px;top:193px;letter-spacing:-0.067px">...00000000000000000000000000</div>
<div class="t r" style="right:246.08px;top:193px;letter-spacing:-0.077px">#9: $00000000000000000000000000000000</div>
<div class="t" style="left:782px;top:193px;letter-spacing:0.2px">03</div>
<div class="a" style="left:825px;top:192px;width:54px;height:16px;border:1px solid #b4b4b4;background:#fcfcfc"></div>
<div class="a" style="left:840px;top:192px;width:1px;height:16px;background:#b4b4b4"></div>
<div class="a" style="left:862px;top:192px;width:1px;height:16px;background:#b4b4b4"></div>
<div class="a" style="left:827px;top:198px;width:11px;height:3px;background:#178a4c"></div>
<div class="a" style="left:865px;top:198px;width:11px;height:3px;background:#178a4c"></div>
<div class="a" style="left:869px;top:194px;width:3px;height:11px;background:#178a4c"></div>
<div class="t" style="left:841.5px;top:194px;width:21px;text-align:center">0</div>
<div class="a" style="left:958px;top:193px;width:13px;height:13px;border:1px solid #1e3a5a;background:linear-gradient(135deg,#dcdcdc,#f8f8f8 60%,#fff)"></div>
<svg class="a" style="left:958px;top:193px" width="13" height="13"><path d="M3 6 L5.5 9 L10 3.6" stroke="#22a022" stroke-width="2" fill="none"/></svg>
<div class="t" style="left:3.0px;top:211px;letter-spacing:0.278px">Self test results log</div>
<div class="t r" style="right:547.57px;top:211px;letter-spacing:-0.067px">...00000000000000000000000000</div>
<div class="t r" style="right:246.07px;top:211px;letter-spacing:-0.070px">#10: $00000000000000000000000000000000</div>
<div class="t" style="left:782px;top:211px;letter-spacing:0.2px">03</div>
<div class="a" style="left:825px;top:210px;width:54px;height:16px;border:1px solid #b4b4b4;background:#fcfcfc"></div>
<div class="a" style="left:840px;top:210px;width:1px;height:16px;background:#b4b4b4"></div>
<div class="a" style="left:862px;top:210px;width:1px;height:16px;background:#b4b4b4"></div>
<div class="a" style="left:827px;top:216px;width:11px;height:3px;background:#178a4c"></div>
<div class="a" style="left:865px;top:216px;width:11px;height:3px;background:#178a4c"></div>
<div class="a" style="left:869px;top:212px;width:3px;height:11px;background:#178a4c"></div>
<div class="t" style="left:841.5px;top:212px;width:21px;text-align:center">0</div>
<div class="a" style="left:958px;top:211px;width:13px;height:13px;border:1px solid #1e3a5a;background:linear-gradient(135deg,#dcdcdc,#f8f8f8 60%,#fff)"></div>
<svg class="a" style="left:958px;top:211px" width="13" height="13"><path d="M3 6 L5.5 9 L10 3.6" stroke="#22a022" stroke-width="2" fill="none"/></svg>
<div class="t" style="left:3.0px;top:229px;letter-spacing:0.278px">Self test results log</div>
<div class="t r" style="right:547.57px;top:229px;letter-spacing:-0.067px">...00000000000000000000000000</div>
<div class="t r" style="right:246.05px;top:229px;letter-spacing:-0.049px">#11: $00000000000000000000000000000000</div>
<div class="t" style="left:782px;top:229px;letter-spacing:0.2px">03</div>
<div class="a" style="left:825px;top:228px;width:54px;height:16px;border:1px solid #b4b4b4;background:#fcfcfc"></div>
<div class="a" style="left:840px;top:228px;width:1px;height:16px;background:#b4b4b4"></div>
<div class="a" style="left:862px;top:228px;width:1px;height:16px;background:#b4b4b4"></div>
<div class="a" style="left:827px;top:234px;width:11px;height:3px;background:#178a4c"></div>
<div class="a" style="left:865px;top:234px;width:11px;height:3px;background:#178a4c"></div>
<div class="a" style="left:869px;top:230px;width:3px;height:11px;background:#178a4c"></div>
<div class="t" style="left:841.5px;top:230px;width:21px;text-align:center">0</div>
<div class="a" style="left:958px;top:229px;width:13px;height:13px;border:1px solid #1e3a5a;background:linear-gradient(135deg,#dcdcdc,#f8f8f8 60%,#fff)"></div>
<svg class="a" style="left:958px;top:229px" width="13" height="13"><path d="M3 6 L5.5 9 L10 3.6" stroke="#22a022" stroke-width="2" fill="none"/></svg>
<div class="t" style="left:3.0px;top:247px;letter-spacing:0.278px">Self test results log</div>
<div class="t r" style="right:547.57px;top:247px;letter-spacing:-0.067px">...00000000000000000000000000</div>
<div class="t r" style="right:246.07px;top:247px;letter-spacing:-0.070px">#12: $00000000000000000000000000000000</div>
<div class="t" style="left:782px;top:247px;letter-spacing:0.2px">03</div>
<div class="a" style="left:825px;top:246px;width:54px;height:16px;border:1px solid #b4b4b4;background:#fcfcfc"></div>
<div class="a" style="left:840px;top:246px;width:1px;height:16px;background:#b4b4b4"></div>
<div class="a" style="left:862px;top:246px;width:1px;height:16px;background:#b4b4b4"></div>
<div class="a" style="left:827px;top:252px;width:11px;height:3px;background:#178a4c"></div>
<div class="a" style="left:865px;top:252px;width:11px;height:3px;background:#178a4c"></div>
<div class="a" style="left:869px;top:248px;width:3px;height:11px;background:#178a4c"></div>
<div class="t" style="left:841.5px;top:248px;width:21px;text-align:center">0</div>
<div class="a" style="left:958px;top:247px;width:13px;height:13px;border:1px solid #1e3a5a;background:linear-gradient(135deg,#dcdcdc,#f8f8f8 60%,#fff)"></div>
<svg class="a" style="left:958px;top:247px" width="13" height="13"><path d="M3 6 L5.5 9 L10 3.6" stroke="#22a022" stroke-width="2" fill="none"/></svg>
<div class="t" style="left:3.0px;top:265px;letter-spacing:0.278px">Self test results log</div>
<div class="t r" style="right:547.57px;top:265px;letter-spacing:-0.067px">...00000000000000000000000000</div>
<div class="t r" style="right:246.07px;top:265px;letter-spacing:-0.070px">#13: $00000000000000000000000000000000</div>
<div class="t" style="left:782px;top:265px;letter-spacing:0.2px">03</div>
<div class="a" style="left:825px;top:264px;width:54px;height:16px;border:1px solid #b4b4b4;background:#fcfcfc"></div>
<div class="a" style="left:840px;top:264px;width:1px;height:16px;background:#b4b4b4"></div>
<div class="a" style="left:862px;top:264px;width:1px;height:16px;background:#b4b4b4"></div>
<div class="a" style="left:827px;top:270px;width:11px;height:3px;background:#178a4c"></div>
<div class="a" style="left:865px;top:270px;width:11px;height:3px;background:#178a4c"></div>
<div class="a" style="left:869px;top:266px;width:3px;height:11px;background:#178a4c"></div>
<div class="t" style="left:841.5px;top:266px;width:21px;text-align:center">0</div>
<div class="a" style="left:958px;top:265px;width:13px;height:13px;border:1px solid #1e3a5a;background:linear-gradient(135deg,#dcdcdc,#f8f8f8 60%,#fff)"></div>
<svg class="a" style="left:958px;top:265px" width="13" height="13"><path d="M3 6 L5.5 9 L10 3.6" stroke="#22a022" stroke-width="2" fill="none"/></svg>
<div class="t" style="left:3.0px;top:283px;letter-spacing:0.366px">Power on time</div>
<div class="t r" style="right:547.5px;top:283px;letter-spacing:0.2px">948 371</div>
<div class="t r" style="right:246.0px;top:283px;letter-spacing:0.2px">948 371</div>
<div class="t" style="left:782px;top:283px;letter-spacing:0.2px">03</div>
<div class="a" style="left:825px;top:282px;width:54px;height:16px;border:1px solid #b4b4b4;background:#fcfcfc"></div>
<div class="a" style="left:840px;top:282px;width:1px;height:16px;background:#b4b4b4"></div>
<div class="a" style="left:862px;top:282px;width:1px;height:16px;background:#b4b4b4"></div>
<div class="a" style="left:827px;top:288px;width:11px;height:3px;background:#178a4c"></div>
<div class="a" style="left:865px;top:288px;width:11px;height:3px;background:#178a4c"></div>
<div class="a" style="left:869px;top:284px;width:3px;height:11px;background:#178a4c"></div>
<div class="t" style="left:841.5px;top:284px;width:21px;text-align:center">0</div>
<div class="a" style="left:958px;top:283px;width:13px;height:13px;border:1px solid #1e3a5a;background:linear-gradient(135deg,#dcdcdc,#f8f8f8 60%,#fff)"></div>
<svg class="a" style="left:958px;top:283px" width="13" height="13"><path d="M3 6 L5.5 9 L10 3.6" stroke="#22a022" stroke-width="2" fill="none"/></svg>
<div class="t" style="left:3.0px;top:301px;letter-spacing:0.390px">Protocol specific port log</div>
<div class="t r" style="right:547.58px;top:301px;letter-spacing:-0.077px">...00000000430000000000000000</div>
<div class="t r" style="right:246.10px;top:301px;letter-spacing:-0.104px">...000000420000000000000000000000430000000000000000</div>
<div class="t" style="left:782px;top:301px;letter-spacing:0.2px">03</div>
<div class="a" style="left:825px;top:300px;width:54px;height:16px;border:1px solid #b4b4b4;background:#fcfcfc"></div>
<div class="a" style="left:840px;top:300px;width:1px;height:16px;background:#b4b4b4"></div>
<div class="a" style="left:862px;top:300px;width:1px;height:16px;background:#b4b4b4"></div>
<div class="a" style="left:827px;top:306px;width:11px;height:3px;background:#178a4c"></div>
<div class="a" style="left:865px;top:306px;width:11px;height:3px;background:#178a4c"></div>
<div class="a" style="left:869px;top:302px;width:3px;height:11px;background:#178a4c"></div>
<div class="t" style="left:841.5px;top:302px;width:21px;text-align:center">0</div>
<div class="a" style="left:958px;top:301px;width:13px;height:13px;border:1px solid #1e3a5a;background:linear-gradient(135deg,#dcdcdc,#f8f8f8 60%,#fff)"></div>
<svg class="a" style="left:958px;top:301px" width="13" height="13"><path d="M3 6 L5.5 9 L10 3.6" stroke="#22a022" stroke-width="2" fill="none"/></svg>
<div class="t" style="left:3.0px;top:319px;letter-spacing:0.390px">Protocol specific port log</div>
<div class="t r" style="right:547.58px;top:319px;letter-spacing:-0.077px">...00000000000000000000000000</div>
<div class="t r" style="right:246.10px;top:319px;letter-spacing:-0.104px">...000000000000000000000000000000000000000000000000</div>
<div class="t" style="left:782px;top:319px;letter-spacing:0.2px">03</div>
<div class="a" style="left:825px;top:318px;width:54px;height:16px;border:1px solid #b4b4b4;background:#fcfcfc"></div>
<div class="a" style="left:840px;top:318px;width:1px;height:16px;background:#b4b4b4"></div>
<div class="a" style="left:862px;top:318px;width:1px;height:16px;background:#b4b4b4"></div>
<div class="a" style="left:827px;top:324px;width:11px;height:3px;background:#178a4c"></div>
<div class="a" style="left:865px;top:324px;width:11px;height:3px;background:#178a4c"></div>
<div class="a" style="left:869px;top:320px;width:3px;height:11px;background:#178a4c"></div>
<div class="t" style="left:841.5px;top:320px;width:21px;text-align:center">0</div>
<div class="a" style="left:958px;top:319px;width:13px;height:13px;border:1px solid #1e3a5a;background:linear-gradient(135deg,#dcdcdc,#f8f8f8 60%,#fff)"></div>
<svg class="a" style="left:958px;top:319px" width="13" height="13"><path d="M3 6 L5.5 9 L10 3.6" stroke="#22a022" stroke-width="2" fill="none"/></svg>
<div class="t" style="left:3.0px;top:337px;letter-spacing:0.309px">Accumulated transitions to active</div>
<div class="t r" style="right:547.5px;top:337px;letter-spacing:0.2px">517 731</div>
<div class="t r" style="right:246.0px;top:337px;letter-spacing:0.2px">517 731</div>
<div class="t" style="left:782px;top:337px;letter-spacing:0.2px">03</div>
<div class="a" style="left:825px;top:336px;width:54px;height:16px;border:1px solid #b4b4b4;background:#fcfcfc"></div>
<div class="a" style="left:840px;top:336px;width:1px;height:16px;background:#b4b4b4"></div>
<div class="a" style="left:862px;top:336px;width:1px;height:16px;background:#b4b4b4"></div>
<div class="a" style="left:827px;top:342px;width:11px;height:3px;background:#178a4c"></div>
<div class="a" style="left:865px;top:342px;width:11px;height:3px;background:#178a4c"></div>
<div class="a" style="left:869px;top:338px;width:3px;height:11px;background:#178a4c"></div>
<div class="t" style="left:841.5px;top:338px;width:21px;text-align:center">0</div>
<div class="a" style="left:958px;top:337px;width:13px;height:13px;border:1px solid #1e3a5a;background:linear-gradient(135deg,#dcdcdc,#f8f8f8 60%,#fff)"></div>
<svg class="a" style="left:958px;top:337px" width="13" height="13"><path d="M3 6 L5.5 9 L10 3.6" stroke="#22a022" stroke-width="2" fill="none"/></svg>
<div class="t" style="left:3.0px;top:355px;letter-spacing:0.318px">Accumulated transitions to idle_a</div>
<div class="t r" style="right:547.5px;top:355px;letter-spacing:0.2px">517 676</div>
<div class="t r" style="right:246.0px;top:355px;letter-spacing:0.2px">517 676</div>
<div class="t" style="left:782px;top:355px;letter-spacing:0.2px">03</div>
<div class="a" style="left:825px;top:354px;width:54px;height:16px;border:1px solid #b4b4b4;background:#fcfcfc"></div>
<div class="a" style="left:840px;top:354px;width:1px;height:16px;background:#b4b4b4"></div>
<div class="a" style="left:862px;top:354px;width:1px;height:16px;background:#b4b4b4"></div>
<div class="a" style="left:827px;top:360px;width:11px;height:3px;background:#178a4c"></div>
<div class="a" style="left:865px;top:360px;width:11px;height:3px;background:#178a4c"></div>
<div class="a" style="left:869px;top:356px;width:3px;height:11px;background:#178a4c"></div>
<div class="t" style="left:841.5px;top:356px;width:21px;text-align:center">0</div>
<div class="a" style="left:958px;top:355px;width:13px;height:13px;border:1px solid #1e3a5a;background:linear-gradient(135deg,#dcdcdc,#f8f8f8 60%,#fff)"></div>
<svg class="a" style="left:958px;top:355px" width="13" height="13"><path d="M3 6 L5.5 9 L10 3.6" stroke="#22a022" stroke-width="2" fill="none"/></svg>
<div class="t" style="left:3.0px;top:373px;letter-spacing:0.349px">Accumulated transitions to idle_b</div>
<div class="t r" style="right:547.5px;top:373px;letter-spacing:0.2px">21 939</div>
<div class="t r" style="right:246.0px;top:373px;letter-spacing:0.2px">21 939</div>
<div class="t" style="left:782px;top:373px;letter-spacing:0.2px">03</div>
<div class="a" style="left:825px;top:372px;width:54px;height:16px;border:1px solid #b4b4b4;background:#fcfcfc"></div>
<div class="a" style="left:840px;top:372px;width:1px;height:16px;background:#b4b4b4"></div>
<div class="a" style="left:862px;top:372px;width:1px;height:16px;background:#b4b4b4"></div>
<div class="a" style="left:827px;top:378px;width:11px;height:3px;background:#178a4c"></div>
<div class="a" style="left:865px;top:378px;width:11px;height:3px;background:#178a4c"></div>
<div class="a" style="left:869px;top:374px;width:3px;height:11px;background:#178a4c"></div>
<div class="t" style="left:841.5px;top:374px;width:21px;text-align:center">0</div>
<div class="a" style="left:958px;top:373px;width:13px;height:13px;border:1px solid #1e3a5a;background:linear-gradient(135deg,#dcdcdc,#f8f8f8 60%,#fff)"></div>
<svg class="a" style="left:958px;top:373px" width="13" height="13"><path d="M3 6 L5.5 9 L10 3.6" stroke="#22a022" stroke-width="2" fill="none"/></svg>
<div class="t" style="left:3.0px;top:391px;letter-spacing:0.328px">Accumulated transitions to idle_c</div>
<div class="t r" style="right:547.5px;top:391px;letter-spacing:0.2px">0</div>
<div class="t r" style="right:246.0px;top:391px;letter-spacing:0.2px">0</div>
<div class="t" style="left:782px;top:391px;letter-spacing:0.2px">03</div>
<div class="a" style="left:825px;top:390px;width:54px;height:16px;border:1px solid #b4b4b4;background:#fcfcfc"></div>
<div class="a" style="left:840px;top:390px;width:1px;height:16px;background:#b4b4b4"></div>
<div class="a" style="left:862px;top:390px;width:1px;height:16px;background:#b4b4b4"></div>
<div class="a" style="left:827px;top:396px;width:11px;height:3px;background:#178a4c"></div>
<div class="a" style="left:865px;top:396px;width:11px;height:3px;background:#178a4c"></div>
<div class="a" style="left:869px;top:392px;width:3px;height:11px;background:#178a4c"></div>
<div class="t" style="left:841.5px;top:392px;width:21px;text-align:center">0</div>
<div class="a" style="left:958px;top:391px;width:13px;height:13px;border:1px solid #1e3a5a;background:linear-gradient(135deg,#dcdcdc,#f8f8f8 60%,#fff)"></div>
<svg class="a" style="left:958px;top:391px" width="13" height="13"><path d="M3 6 L5.5 9 L10 3.6" stroke="#22a022" stroke-width="2" fill="none"/></svg>
<div class="t" style="left:3.0px;top:409px;letter-spacing:0.314px">Accumulated transitions to standby_z</div>
<div class="t r" style="right:547.5px;top:409px;letter-spacing:0.2px">0</div>
<div class="t r" style="right:246.0px;top:409px;letter-spacing:0.2px">0</div>
<div class="t" style="left:782px;top:409px;letter-spacing:0.2px">03</div>
<div class="a" style="left:825px;top:408px;width:54px;height:16px;border:1px solid #b4b4b4;background:#fcfcfc"></div>
<div class="a" style="left:840px;top:408px;width:1px;height:16px;background:#b4b4b4"></div>
<div class="a" style="left:862px;top:408px;width:1px;height:16px;background:#b4b4b4"></div>
<div class="a" style="left:827px;top:414px;width:11px;height:3px;background:#178a4c"></div>
<div class="a" style="left:865px;top:414px;width:11px;height:3px;background:#178a4c"></div>
<div class="a" style="left:869px;top:410px;width:3px;height:11px;background:#178a4c"></div>
<div class="t" style="left:841.5px;top:410px;width:21px;text-align:center">0</div>
<div class="a" style="left:958px;top:409px;width:13px;height:13px;border:1px solid #1e3a5a;background:linear-gradient(135deg,#dcdcdc,#f8f8f8 60%,#fff)"></div>
<svg class="a" style="left:958px;top:409px" width="13" height="13"><path d="M3 6 L5.5 9 L10 3.6" stroke="#22a022" stroke-width="2" fill="none"/></svg>
<div class="t" style="left:3.0px;top:427px;letter-spacing:0.314px">Accumulated transitions to standby_y</div>
<div class="t r" style="right:547.5px;top:427px;letter-spacing:0.2px">0</div>
<div class="t r" style="right:246.0px;top:427px;letter-spacing:0.2px">0</div>
<div class="t" style="left:782px;top:427px;letter-spacing:0.2px">03</div>
<div class="a" style="left:825px;top:426px;width:54px;height:16px;border:1px solid #b4b4b4;background:#fcfcfc"></div>
<div class="a" style="left:840px;top:426px;width:1px;height:16px;background:#b4b4b4"></div>
<div class="a" style="left:862px;top:426px;width:1px;height:16px;background:#b4b4b4"></div>
<div class="a" style="left:827px;top:432px;width:11px;height:3px;background:#178a4c"></div>
<div class="a" style="left:865px;top:432px;width:11px;height:3px;background:#178a4c"></div>
<div class="a" style="left:869px;top:428px;width:3px;height:11px;background:#178a4c"></div>
<div class="t" style="left:841.5px;top:428px;width:21px;text-align:center">0</div>
<div class="a" style="left:958px;top:427px;width:13px;height:13px;border:1px solid #1e3a5a;background:linear-gradient(135deg,#dcdcdc,#f8f8f8 60%,#fff)"></div>
<svg class="a" style="left:958px;top:427px" width="13" height="13"><path d="M3 6 L5.5 9 L10 3.6" stroke="#22a022" stroke-width="2" fill="none"/></svg>
<div class="t" style="left:3.0px;top:445px;letter-spacing:-0.501px">SC38_0001</div>
<div class="t r" style="right:547.71px;top:445px;letter-spacing:-0.209px">$002932E0000E7893</div>
<div class="t r" style="right:246.23px;top:445px;letter-spacing:-0.227px">$002932E0000E7893</div>
<div class="t" style="left:782px;top:445px;letter-spacing:0.2px">00</div>
<div class="a" style="left:825px;top:444px;width:54px;height:16px;border:1px solid #b4b4b4;background:#fcfcfc"></div>
<div class="a" style="left:840px;top:444px;width:1px;height:16px;background:#b4b4b4"></div>
<div class="a" style="left:862px;top:444px;width:1px;height:16px;background:#b4b4b4"></div>
<div class="a" style="left:827px;top:450px;width:11px;height:3px;background:#178a4c"></div>
<div class="a" style="left:865px;top:450px;width:11px;height:3px;background:#178a4c"></div>
<div class="a" style="left:869px;top:446px;width:3px;height:11px;background:#178a4c"></div>
<div class="t" style="left:841.5px;top:446px;width:21px;text-align:center">0</div>
<div class="a" style="left:958px;top:445px;width:13px;height:13px;border:1px solid #1e3a5a;background:linear-gradient(135deg,#dcdcdc,#f8f8f8 60%,#fff)"></div>
<svg class="a" style="left:958px;top:445px" width="13" height="13"><path d="M3 6 L5.5 9 L10 3.6" stroke="#22a022" stroke-width="2" fill="none"/></svg>
<div class="t" style="left:3.0px;top:463px;letter-spacing:-0.439px">SC38_0002</div>
<div class="t r" style="right:547.58px;top:463px;letter-spacing:-0.077px">...43000000000000142400000000</div>
<div class="t r" style="right:246.13px;top:463px;letter-spacing:-0.132px">...0000458F0000000000006C43000000000000142400000000</div>
<div class="t" style="left:782px;top:463px;letter-spacing:0.2px">00</div>
<div class="a" style="left:825px;top:462px;width:54px;height:16px;border:1px solid #b4b4b4;background:#fcfcfc"></div>
<div class="a" style="left:840px;top:462px;width:1px;height:16px;background:#b4b4b4"></div>
<div class="a" style="left:862px;top:462px;width:1px;height:16px;background:#b4b4b4"></div>
<div class="a" style="left:827px;top:468px;width:11px;height:3px;background:#178a4c"></div>
<div class="a" style="left:865px;top:468px;width:11px;height:3px;background:#178a4c"></div>
<div class="a" style="left:869px;top:464px;width:3px;height:11px;background:#178a4c"></div>
<div class="t" style="left:841.5px;top:464px;width:21px;text-align:center">0</div>
<div class="a" style="left:958px;top:463px;width:13px;height:13px;border:1px solid #1e3a5a;background:linear-gradient(135deg,#dcdcdc,#f8f8f8 60%,#fff)"></div>
<svg class="a" style="left:958px;top:463px" width="13" height="13"><path d="M3 6 L5.5 9 L10 3.6" stroke="#22a022" stroke-width="2" fill="none"/></svg>
<div class="t" style="left:3.0px;top:481px;letter-spacing:-0.439px">SC38_0003</div>
<div class="t r" style="right:547.64px;top:481px;letter-spacing:-0.140px">...B900000000000146E200000000</div>
<div class="t r" style="right:246.15px;top:481px;letter-spacing:-0.146px">...001192C000000000000C2B900000000000146E200000000</div>
<div class="t" style="left:782px;top:481px;letter-spacing:0.2px">00</div>
<div class="a" style="left:825px;top:480px;width:54px;height:16px;border:1px solid #b4b4b4;background:#fcfcfc"></div>
<div class="a" style="left:840px;top:480px;width:1px;height:16px;background:#b4b4b4"></div>
<div class="a" style="left:862px;top:480px;width:1px;height:16px;background:#b4b4b4"></div>
<div class="a" style="left:827px;top:486px;width:11px;height:3px;background:#178a4c"></div>
<div class="a" style="left:865px;top:486px;width:11px;height:3px;background:#178a4c"></div>
<div class="a" style="left:869px;top:482px;width:3px;height:11px;background:#178a4c"></div>
<div class="t" style="left:841.5px;top:482px;width:21px;text-align:center">0</div>
<div class="a" style="left:958px;top:481px;width:13px;height:13px;border:1px solid #1e3a5a;background:linear-gradient(135deg,#dcdcdc,#f8f8f8 60%,#fff)"></div>
<svg class="a" style="left:958px;top:481px" width="13" height="13"><path d="M3 6 L5.5 9 L10 3.6" stroke="#22a022" stroke-width="2" fill="none"/></svg>
<div class="t" style="left:3.0px;top:499px;letter-spacing:0.276px">Primary defect list count</div>
<div class="t r" style="right:547.5px;top:499px;letter-spacing:0.2px">4 312</div>
<div class="t r" style="right:246.0px;top:499px;letter-spacing:0.2px">4 312</div>
<div class="t" style="left:782px;top:499px;letter-spacing:0.2px">00</div>
<div class="a" style="left:825px;top:498px;width:54px;height:16px;border:1px solid #b4b4b4;background:#fcfcfc"></div>
<div class="a" style="left:840px;top:498px;width:1px;height:16px;background:#b4b4b4"></div>
<div class="a" style="left:862px;top:498px;width:1px;height:16px;background:#b4b4b4"></div>
<div class="a" style="left:827px;top:504px;width:11px;height:3px;background:#178a4c"></div>
<div class="a" style="left:865px;top:504px;width:11px;height:3px;background:#178a4c"></div>
<div class="a" style="left:869px;top:500px;width:3px;height:11px;background:#178a4c"></div>
<div class="t" style="left:841.5px;top:500px;width:21px;text-align:center">0</div>
<div class="a" style="left:958px;top:499px;width:13px;height:13px;border:1px solid #1e3a5a;background:linear-gradient(135deg,#dcdcdc,#f8f8f8 60%,#fff)"></div>
<svg class="a" style="left:958px;top:499px" width="13" height="13"><path d="M3 6 L5.5 9 L10 3.6" stroke="#22a022" stroke-width="2" fill="none"/></svg>
<div class="t" style="left:3.0px;top:517px;letter-spacing:0.464px">Grown defect list count</div>
<div class="t r" style="right:547.5px;top:517px;letter-spacing:0.2px">0</div>
<div class="t r" style="right:246.0px;top:517px;letter-spacing:0.2px">0</div>
<div class="t" style="left:782px;top:517px;letter-spacing:0.2px">00</div>
<div class="a" style="left:825px;top:516px;width:54px;height:16px;border:1px solid #b4b4b4;background:#fcfcfc"></div>
<div class="a" style="left:840px;top:516px;width:1px;height:16px;background:#b4b4b4"></div>
<div class="a" style="left:862px;top:516px;width:1px;height:16px;background:#b4b4b4"></div>
<div class="a" style="left:827px;top:522px;width:11px;height:3px;background:#178a4c"></div>
<div class="a" style="left:865px;top:522px;width:11px;height:3px;background:#178a4c"></div>
<div class="a" style="left:869px;top:518px;width:3px;height:11px;background:#178a4c"></div>
<div class="t" style="left:841.5px;top:518px;width:21px;text-align:center">0</div>
<div class="a" style="left:958px;top:517px;width:13px;height:13px;border:1px solid #1e3a5a;background:linear-gradient(135deg,#dcdcdc,#f8f8f8 60%,#fff)"></div>
<svg class="a" style="left:958px;top:517px" width="13" height="13"><path d="M3 6 L5.5 9 L10 3.6" stroke="#22a022" stroke-width="2" fill="none"/></svg>
</div>
<div class="a" style="left:388px;top:112px;width:1033px;height:18px;background:#f0f0f0"></div>
<div class="a" style="left:388px;top:112px;width:302px;height:18px;border-top:1px solid #fff;border-left:1px solid #fff;border-right:1px solid #696969;border-bottom:1px solid #696969;box-shadow:inset -1px -1px 0 #a0a0a0"></div>
<div class="t" style="left:392.9px;top:115px;;letter-spacing:0.816px">Attribute</div>
<div class="a" style="left:690px;top:112px;width:171px;height:18px;border-top:1px solid #fff;border-left:1px solid #fff;border-right:1px solid #696969;border-bottom:1px solid #696969;box-shadow:inset -1px -1px 0 #a0a0a0"></div>
<div class="t" style="left:801.1px;top:115px;;letter-spacing:0.460px">Threshold</div>
<div class="a" style="left:861px;top:112px;width:302px;height:18px;border-top:1px solid #fff;border-left:1px solid #fff;border-right:1px solid #696969;border-bottom:1px solid #696969;box-shadow:inset -1px -1px 0 #a0a0a0"></div>
<div class="t" style="left:1125.2px;top:115px;;letter-spacing:0.768px">Value</div>
<div class="a" style="left:1163px;top:112px;width:50px;height:18px;border-top:1px solid #fff;border-left:1px solid #fff;border-right:1px solid #696969;border-bottom:1px solid #696969;box-shadow:inset -1px -1px 0 #a0a0a0"></div>
<div class="t" style="left:1168.8px;top:115px;;letter-spacing:0.273px">Flags</div>
<div class="a" style="left:1213px;top:112px;width:100px;height:18px;border-top:1px solid #fff;border-left:1px solid #fff;border-right:1px solid #696969;border-bottom:1px solid #696969;box-shadow:inset -1px -1px 0 #a0a0a0"></div>
<div class="t" style="left:1218.8px;top:115px;;letter-spacing:0.729px">Offset</div>
<div class="a" style="left:1313px;top:112px;width:80px;height:18px;border-top:1px solid #fff;border-left:1px solid #fff;border-right:1px solid #696969;border-bottom:1px solid #696969;box-shadow:inset -1px -1px 0 #a0a0a0"></div>
<div class="t" style="left:1318.8px;top:115px;;letter-spacing:0.327px">Enable</div>
<div class="a" style="left:1405px;top:146px;width:16px;height:231px;background-color:#f4f4f4;background-image:repeating-conic-gradient(#fff 0 25%, #ececec 0 50%);background-size:2px 2px"></div>
<div class="a" style="left:1405px;top:130px;width:16px;height:16px;background:#f0f0f0;border-top:1px solid #e3e3e3;border-left:1px solid #e3e3e3;border-right:1px solid #696969;border-bottom:1px solid #696969;box-shadow:inset -1px -1px 0 #a0a0a0, inset 1px 1px 0 #fff"><svg class="a" style="left:-1px;top:-1px" width="16" height="16"><path d="M3.5 9.5 L10.5 9.5 L7 6 Z" fill="#000"/></svg></div>
<div class="a" style="left:1405px;top:377px;width:16px;height:268px;background:#f0f0f0;border-top:1px solid #e3e3e3;border-left:1px solid #e3e3e3;border-right:1px solid #696969;border-bottom:1px solid #696969;box-shadow:inset -1px -1px 0 #a0a0a0, inset 1px 1px 0 #fff"></div>
<div class="a" style="left:1405px;top:645px;width:16px;height:17px;background:#f0f0f0;border-top:1px solid #e3e3e3;border-left:1px solid #e3e3e3;border-right:1px solid #696969;border-bottom:1px solid #696969;box-shadow:inset -1px -1px 0 #a0a0a0, inset 1px 1px 0 #fff"><svg class="a" style="left:-1px;top:-1px" width="16" height="16"><path d="M3.5 7.5 L10.5 7.5 L7 11 Z" fill="#000"/></svg></div>
<div class="a" style="left:387px;top:669px;width:316px;height:23px;background:#f0f0f0;border-top:1px solid #fff;border-left:1px solid #fff"></div>
<div class="a" style="left:701px;top:670px;width:1px;height:21px;background:#a0a0a0"></div>
<div class="a" style="left:702px;top:670px;width:1px;height:21px;background:#696969"></div>
<div class="t" style="left:393.6px;top:673px;;letter-spacing:0.342px">Write errors corrected without substantial delay (02_0000)</div>
<div class="a" style="left:703px;top:691px;width:719px;height:1px;background:#fff"></div>
<div class="a" style="left:387px;top:692px;width:1px;height:175px;background:#fff"></div>
<div class="a" style="left:1421px;top:691px;width:1px;height:176px;background:#a0a0a0"></div>
<div class="a" style="left:1422px;top:691px;width:1px;height:177px;background:#696969"></div>
<div class="a" style="left:387px;top:866px;width:1035px;height:1px;background:#a0a0a0"></div>
<div class="a" style="left:387px;top:867px;width:1036px;height:1px;background:#696969"></div>
<svg class="a" style="left:389px;top:693px" width="798" height="170" viewBox="389 693 798 170"><defs><linearGradient id="cg" x1="0" y1="0" x2="0" y2="1"><stop offset="0" stop-color="#ffffff"/><stop offset="1" stop-color="#bdbdbd"/></linearGradient></defs><rect x="389" y="693" width="798" height="170" fill="url(#cg)"/><rect x="389" y="693" width="1" height="170" fill="#e8e8e8"/><path d="M426.5 712 L426.5 804" stroke="#8c8c8c" stroke-width="1" stroke-dasharray="3,3"/><path d="M426.5 804 L426.5 809" stroke="#404040" stroke-width="1"/><path d="M441.5 712 L441.5 804" stroke="#8c8c8c" stroke-width="1" stroke-dasharray="3,3"/><path d="M441.5 804 L441.5 809" stroke="#404040" stroke-width="1"/><path d="M458.5 712 L458.5 804" stroke="#8c8c8c" stroke-width="1" stroke-dasharray="3,3"/><path d="M458.5 804 L458.5 809" stroke="#404040" stroke-width="1"/><path d="M473.5 712 L473.5 804" stroke="#8c8c8c" stroke-width="1" stroke-dasharray="3,3"/><path d="M473.5 804 L473.5 809" stroke="#404040" stroke-width="1"/><path d="M489.5 712 L489.5 804" stroke="#8c8c8c" stroke-width="1" stroke-dasharray="3,3"/><path d="M489.5 804 L489.5 809" stroke="#404040" stroke-width="1"/><path d="M505.5 712 L505.5 804" stroke="#8c8c8c" stroke-width="1" stroke-dasharray="3,3"/><path d="M505.5 804 L505.5 809" stroke="#404040" stroke-width="1"/><path d="M522.5 712 L522.5 804" stroke="#8c8c8c" stroke-width="1" stroke-dasharray="3,3"/><path d="M522.5 804 L522.5 809" stroke="#404040" stroke-width="1"/><path d="M538.5 712 L538.5 804" stroke="#8c8c8c" stroke-width="1" stroke-dasharray="3,3"/><path d="M538.5 804 L538.5 809" stroke="#404040" stroke-width="1"/><path d="M554.5 712 L554.5 804" stroke="#8c8c8c" stroke-width="1" stroke-dasharray="3,3"/><path d="M554.5 804 L554.5 809" stroke="#404040" stroke-width="1"/><path d="M570.5 712 L570.5 804" stroke="#8c8c8c" stroke-width="1" stroke-dasharray="3,3"/><path d="M570.5 804 L570.5 809" stroke="#404040" stroke-width="1"/><path d="M586.5 712 L586.5 804" stroke="#8c8c8c" stroke-width="1" stroke-dasharray="3,3"/><path d="M586.5 804 L586.5 809" stroke="#404040" stroke-width="1"/><path d="M603.5 712 L603.5 804" stroke="#8c8c8c" stroke-width="1" stroke-dasharray="3,3"/><path d="M603.5 804 L603.5 809" stroke="#404040" stroke-width="1"/><path d="M620.5 712 L620.5 804" stroke="#8c8c8c" stroke-width="1" stroke-dasharray="3,3"/><path d="M620.5 804 L620.5 809" stroke="#404040" stroke-width="1"/><path d="M635.5 712 L635.5 804" stroke="#8c8c8c" stroke-width="1" stroke-dasharray="3,3"/><path d="M635.5 804 L635.5 809" stroke="#404040" stroke-width="1"/><path d="M651.5 712 L651.5 804" stroke="#8c8c8c" stroke-width="1" stroke-dasharray="3,3"/><path d="M651.5 804 L651.5 809" stroke="#404040" stroke-width="1"/><path d="M667.5 712 L667.5 804" stroke="#8c8c8c" stroke-width="1" stroke-dasharray="3,3"/><path d="M667.5 804 L667.5 809" stroke="#404040" stroke-width="1"/><path d="M684.5 712 L684.5 804" stroke="#8c8c8c" stroke-width="1" stroke-dasharray="3,3"/><path d="M684.5 804 L684.5 809" stroke="#404040" stroke-width="1"/><path d="M699.5 712 L699.5 804" stroke="#8c8c8c" stroke-width="1" stroke-dasharray="3,3"/><path d="M699.5 804 L699.5 809" stroke="#404040" stroke-width="1"/><path d="M715.5 712 L715.5 804" stroke="#8c8c8c" stroke-width="1" stroke-dasharray="3,3"/><path d="M715.5 804 L715.5 809" stroke="#404040" stroke-width="1"/><path d="M731.5 712 L731.5 804" stroke="#8c8c8c" stroke-width="1" stroke-dasharray="3,3"/><path d="M731.5 804 L731.5 809" stroke="#404040" stroke-width="1"/><path d="M748.5 712 L748.5 804" stroke="#8c8c8c" stroke-width="1" stroke-dasharray="3,3"/><path d="M748.5 804 L748.5 809" stroke="#404040" stroke-width="1"/><path d="M765.5 712 L765.5 804" stroke="#8c8c8c" stroke-width="1" stroke-dasharray="3,3"/><path d="M765.5 804 L765.5 809" stroke="#404040" stroke-width="1"/><path d="M780.5 712 L780.5 804" stroke="#8c8c8c" stroke-width="1" stroke-dasharray="3,3"/><path d="M780.5 804 L780.5 809" stroke="#404040" stroke-width="1"/><path d="M796.5 712 L796.5 804" stroke="#8c8c8c" stroke-width="1" stroke-dasharray="3,3"/><path d="M796.5 804 L796.5 809" stroke="#404040" stroke-width="1"/><path d="M812.5 712 L812.5 804" stroke="#8c8c8c" stroke-width="1" stroke-dasharray="3,3"/><path d="M812.5 804 L812.5 809" stroke="#404040" stroke-width="1"/><path d="M829.5 712 L829.5 804" stroke="#8c8c8c" stroke-width="1" stroke-dasharray="3,3"/><path d="M829.5 804 L829.5 809" stroke="#404040" stroke-width="1"/><path d="M844.5 712 L844.5 804" stroke="#8c8c8c" stroke-width="1" stroke-dasharray="3,3"/><path d="M844.5 804 L844.5 809" stroke="#404040" stroke-width="1"/><path d="M860.5 712 L860.5 804" stroke="#8c8c8c" stroke-width="1" stroke-dasharray="3,3"/><path d="M860.5 804 L860.5 809" stroke="#404040" stroke-width="1"/><path d="M876.5 712 L876.5 804" stroke="#8c8c8c" stroke-width="1" stroke-dasharray="3,3"/><path d="M876.5 804 L876.5 809" stroke="#404040" stroke-width="1"/><path d="M893.5 712 L893.5 804" stroke="#8c8c8c" stroke-width="1" stroke-dasharray="3,3"/><path d="M893.5 804 L893.5 809" stroke="#404040" stroke-width="1"/><path d="M910.5 712 L910.5 804" stroke="#8c8c8c" stroke-width="1" stroke-dasharray="3,3"/><path d="M910.5 804 L910.5 809" stroke="#404040" stroke-width="1"/><path d="M926.5 712 L926.5 804" stroke="#8c8c8c" stroke-width="1" stroke-dasharray="3,3"/><path d="M926.5 804 L926.5 809" stroke="#404040" stroke-width="1"/><path d="M941.5 712 L941.5 804" stroke="#8c8c8c" stroke-width="1" stroke-dasharray="3,3"/><path d="M941.5 804 L941.5 809" stroke="#404040" stroke-width="1"/><path d="M957.5 712 L957.5 804" stroke="#8c8c8c" stroke-width="1" stroke-dasharray="3,3"/><path d="M957.5 804 L957.5 809" stroke="#404040" stroke-width="1"/><path d="M974.5 712 L974.5 804" stroke="#8c8c8c" stroke-width="1" stroke-dasharray="3,3"/><path d="M974.5 804 L974.5 809" stroke="#404040" stroke-width="1"/><path d="M991.5 712 L991.5 804" stroke="#8c8c8c" stroke-width="1" stroke-dasharray="3,3"/><path d="M991.5 804 L991.5 809" stroke="#404040" stroke-width="1"/><path d="M1026.5 712 L1026.5 804" stroke="#8c8c8c" stroke-width="1" stroke-dasharray="3,3"/><path d="M1026.5 804 L1026.5 809" stroke="#404040" stroke-width="1"/><path d="M1041.5 712 L1041.5 804" stroke="#8c8c8c" stroke-width="1" stroke-dasharray="3,3"/><path d="M1041.5 804 L1041.5 809" stroke="#404040" stroke-width="1"/><path d="M1057.5 712 L1057.5 804" stroke="#8c8c8c" stroke-width="1" stroke-dasharray="3,3"/><path d="M1057.5 804 L1057.5 809" stroke="#404040" stroke-width="1"/><path d="M1074.5 712 L1074.5 804" stroke="#8c8c8c" stroke-width="1" stroke-dasharray="3,3"/><path d="M1074.5 804 L1074.5 809" stroke="#404040" stroke-width="1"/><path d="M1091.5 712 L1091.5 804" stroke="#8c8c8c" stroke-width="1" stroke-dasharray="3,3"/><path d="M1091.5 804 L1091.5 809" stroke="#404040" stroke-width="1"/><path d="M1107.5 712 L1107.5 804" stroke="#8c8c8c" stroke-width="1" stroke-dasharray="3,3"/><path d="M1107.5 804 L1107.5 809" stroke="#404040" stroke-width="1"/><path d="M1122.5 712 L1122.5 804" stroke="#8c8c8c" stroke-width="1" stroke-dasharray="3,3"/><path d="M1122.5 804 L1122.5 809" stroke="#404040" stroke-width="1"/><path d="M1138.5 712 L1138.5 804" stroke="#8c8c8c" stroke-width="1" stroke-dasharray="3,3"/><path d="M1138.5 804 L1138.5 809" stroke="#404040" stroke-width="1"/><path d="M1155.5 712 L1155.5 804" stroke="#8c8c8c" stroke-width="1" stroke-dasharray="3,3"/><path d="M1155.5 804 L1155.5 809" stroke="#404040" stroke-width="1"/><path d="M423 711.5 L1171 711.5 M423 804.5 L1171 804.5" stroke="#000" stroke-width="1" stroke-dasharray="4,3"/><path d="M1171.5 711 L1171.5 805" stroke="#000" stroke-width="1"/><path d="M423.5 711 L423.5 805" stroke="#000" stroke-width="1.2"/><path d="M418 711.5 L423 711.5" stroke="#606060" stroke-width="1"/><path d="M418 758.5 L423 758.5" stroke="#606060" stroke-width="1"/><path d="M418 804.5 L423 804.5" stroke="#606060" stroke-width="1"/><rect x="423" y="756" width="585" height="5" fill="#000"/><rect x="1008" y="757" width="46" height="2" fill="#1010c0"/><rect x="1023" y="756" width="5" height="5" fill="#000"/><rect x="1024" y="757" width="3" height="3" fill="#1818d0"/><rect x="1039" y="756" width="12" height="5" fill="#000"/><rect x="1044" y="757" width="4" height="3" fill="#1818d0"/><rect x="1054" y="756" width="118" height="5" fill="#000"/><rect x="428" y="757.5" width="1.5" height="2" fill="#2828c8"/><rect x="438.90371701673513" y="757.5" width="1.5" height="2" fill="#2828c8"/><rect x="452.25755081910273" y="757.5" width="1.5" height="2" fill="#2828c8"/><rect x="464.2171921514874" y="757.5" width="1.5" height="2" fill="#2828c8"/><rect x="478.04855246025693" y="757.5" width="1.5" height="2" fill="#2828c8"/><rect x="492.0543148931214" y="757.5" width="1.5" height="2" fill="#2828c8"/><rect x="501.5785457670399" y="757.5" width="1.5" height="2" fill="#2828c8"/><rect x="510.68388969947887" y="757.5" width="1.5" height="2" fill="#2828c8"/><rect x="526.3836423562506" y="757.5" width="1.5" height="2" fill="#2828c8"/><rect x="537.4584744708746" y="757.5" width="1.5" height="2" fill="#2828c8"/><rect x="548.3331221592482" y="757.5" width="1.5" height="2" fill="#2828c8"/><rect x="565.2982808433319" y="757.5" width="1.5" height="2" fill="#2828c8"/><rect x="578.0603889035115" y="757.5" width="1.5" height="2" fill="#2828c8"/><rect x="593.7520805137066" y="757.5" width="1.5" height="2" fill="#2828c8"/><rect x="606.5629061833013" y="757.5" width="1.5" height="2" fill="#2828c8"/><rect x="620.6754513076546" y="757.5" width="1.5" height="2" fill="#2828c8"/><rect x="630.8803826998428" y="757.5" width="1.5" height="2" fill="#2828c8"/><rect x="644.9592679661243" y="757.5" width="1.5" height="2" fill="#2828c8"/><rect x="660.9036304232707" y="757.5" width="1.5" height="2" fill="#2828c8"/><rect x="674.0890801063371" y="757.5" width="1.5" height="2" fill="#2828c8"/><rect x="689.019094955949" y="757.5" width="1.5" height="2" fill="#2828c8"/><rect x="703.3903867589057" y="757.5" width="1.5" height="2" fill="#2828c8"/><rect x="712.9026382647216" y="757.5" width="1.5" height="2" fill="#2828c8"/><rect x="727.9684802350162" y="757.5" width="1.5" height="2" fill="#2828c8"/><rect x="741.6972768984667" y="757.5" width="1.5" height="2" fill="#2828c8"/><rect x="753.1074181745925" y="757.5" width="1.5" height="2" fill="#2828c8"/><rect x="762.3555121863504" y="757.5" width="1.5" height="2" fill="#2828c8"/><rect x="778.279730082182" y="757.5" width="1.5" height="2" fill="#2828c8"/><rect x="791.0617227915058" y="757.5" width="1.5" height="2" fill="#2828c8"/><rect x="805.8123141840322" y="757.5" width="1.5" height="2" fill="#2828c8"/><rect x="821.8428165860761" y="757.5" width="1.5" height="2" fill="#2828c8"/><rect x="836.5558524549657" y="757.5" width="1.5" height="2" fill="#2828c8"/><rect x="852.9246417956367" y="757.5" width="1.5" height="2" fill="#2828c8"/><rect x="865.0843490276427" y="757.5" width="1.5" height="2" fill="#2828c8"/><rect x="880.4916191955245" y="757.5" width="1.5" height="2" fill="#2828c8"/><rect x="893.0485876439307" y="757.5" width="1.5" height="2" fill="#2828c8"/><rect x="909.5332814175669" y="757.5" width="1.5" height="2" fill="#2828c8"/><rect x="925.5642147002712" y="757.5" width="1.5" height="2" fill="#2828c8"/><rect x="935.3438491781183" y="757.5" width="1.5" height="2" fill="#2828c8"/><rect x="945.4316000597236" y="757.5" width="1.5" height="2" fill="#2828c8"/><rect x="956.1674955895886" y="757.5" width="1.5" height="2" fill="#2828c8"/><rect x="972.8913367007742" y="757.5" width="1.5" height="2" fill="#2828c8"/><rect x="985.3806316337937" y="757.5" width="1.5" height="2" fill="#2828c8"/><rect x="999.393817960728" y="757.5" width="1.5" height="2" fill="#2828c8"/><rect x="1061.4347782589282" y="757.5" width="1.5" height="2" fill="#2828c8"/><rect x="1075.1087926026898" y="757.5" width="1.5" height="2" fill="#2828c8"/><rect x="1091.342406769472" y="757.5" width="1.5" height="2" fill="#2828c8"/><rect x="1105.7982638625517" y="757.5" width="1.5" height="2" fill="#2828c8"/><rect x="1122.2298286721518" y="757.5" width="1.5" height="2" fill="#2828c8"/><rect x="1138.081033203326" y="757.5" width="1.5" height="2" fill="#2828c8"/><rect x="1155.0089503622764" y="757.5" width="1.5" height="2" fill="#2828c8"/><rect x="1005" y="757" width="3" height="3" fill="#1818d0"/></svg>
<div class="t" style="left:413px;top:705px;font-size:11px">1</div>
<div class="t" style="left:413px;top:752px;font-size:11px">0</div>
<div class="t" style="left:409px;top:798px;font-size:11px">-1</div>
<div class="t" style="left:399.0px;top:828.5px;width:55px;text-align:center;transform:rotate(-90deg);font-size:11px;letter-spacing:-0.15px">21/11/2021</div>
<div class="t" style="left:413.6px;top:828.5px;width:55px;text-align:center;transform:rotate(-90deg);font-size:11px;letter-spacing:-0.15px">04/12/2021</div>
<div class="t" style="left:430.5px;top:828.5px;width:55px;text-align:center;transform:rotate(-90deg);font-size:11px;letter-spacing:-0.15px">19/12/2021</div>
<div class="t" style="left:446.2px;top:828.5px;width:55px;text-align:center;transform:rotate(-90deg);font-size:11px;letter-spacing:-0.15px">02/01/2022</div>
<div class="t" style="left:462.0px;top:828.5px;width:55px;text-align:center;transform:rotate(-90deg);font-size:11px;letter-spacing:-0.15px">16/01/2022</div>
<div class="t" style="left:477.8px;top:828.5px;width:55px;text-align:center;transform:rotate(-90deg);font-size:11px;letter-spacing:-0.15px">30/01/2022</div>
<div class="t" style="left:494.6px;top:828.5px;width:55px;text-align:center;transform:rotate(-90deg);font-size:11px;letter-spacing:-0.15px">14/02/2022</div>
<div class="t" style="left:511.5px;top:828.5px;width:55px;text-align:center;transform:rotate(-90deg);font-size:11px;letter-spacing:-0.15px">01/03/2022</div>
<div class="t" style="left:527.2px;top:828.5px;width:55px;text-align:center;transform:rotate(-90deg);font-size:11px;letter-spacing:-0.15px">15/03/2022</div>
<div class="t" style="left:543.0px;top:828.5px;width:55px;text-align:center;transform:rotate(-90deg);font-size:11px;letter-spacing:-0.15px">29/03/2022</div>
<div class="t" style="left:558.8px;top:828.5px;width:55px;text-align:center;transform:rotate(-90deg);font-size:11px;letter-spacing:-0.15px">12/04/2022</div>
<div class="t" style="left:575.6px;top:828.5px;width:55px;text-align:center;transform:rotate(-90deg);font-size:11px;letter-spacing:-0.15px">27/04/2022</div>
<div class="t" style="left:592.5px;top:828.5px;width:55px;text-align:center;transform:rotate(-90deg);font-size:11px;letter-spacing:-0.15px">12/05/2022</div>
<div class="t" style="left:608.2px;top:828.5px;width:55px;text-align:center;transform:rotate(-90deg);font-size:11px;letter-spacing:-0.15px">26/05/2022</div>
<div class="t" style="left:624.0px;top:828.5px;width:55px;text-align:center;transform:rotate(-90deg);font-size:11px;letter-spacing:-0.15px">09/06/2022</div>
<div class="t" style="left:639.8px;top:828.5px;width:55px;text-align:center;transform:rotate(-90deg);font-size:11px;letter-spacing:-0.15px">23/06/2022</div>
<div class="t" style="left:656.6px;top:828.5px;width:55px;text-align:center;transform:rotate(-90deg);font-size:11px;letter-spacing:-0.15px">08/07/2022</div>
<div class="t" style="left:672.4px;top:828.5px;width:55px;text-align:center;transform:rotate(-90deg);font-size:11px;letter-spacing:-0.15px">22/07/2022</div>
<div class="t" style="left:688.1px;top:828.5px;width:55px;text-align:center;transform:rotate(-90deg);font-size:11px;letter-spacing:-0.15px">05/08/2022</div>
<div class="t" style="left:703.9px;top:828.5px;width:55px;text-align:center;transform:rotate(-90deg);font-size:11px;letter-spacing:-0.15px">19/08/2022</div>
<div class="t" style="left:720.8px;top:828.5px;width:55px;text-align:center;transform:rotate(-90deg);font-size:11px;letter-spacing:-0.15px">03/09/2022</div>
<div class="t" style="left:737.6px;top:828.5px;width:55px;text-align:center;transform:rotate(-90deg);font-size:11px;letter-spacing:-0.15px">18/09/2022</div>
<div class="t" style="left:753.4px;top:828.5px;width:55px;text-align:center;transform:rotate(-90deg);font-size:11px;letter-spacing:-0.15px">02/10/2022</div>
<div class="t" style="left:769.1px;top:828.5px;width:55px;text-align:center;transform:rotate(-90deg);font-size:11px;letter-spacing:-0.15px">16/10/2022</div>
<div class="t" style="left:784.9px;top:828.5px;width:55px;text-align:center;transform:rotate(-90deg);font-size:11px;letter-spacing:-0.15px">30/10/2022</div>
<div class="t" style="left:801.8px;top:828.5px;width:55px;text-align:center;transform:rotate(-90deg);font-size:11px;letter-spacing:-0.15px">14/11/2022</div>
<div class="t" style="left:817.5px;top:828.5px;width:55px;text-align:center;transform:rotate(-90deg);font-size:11px;letter-spacing:-0.15px">28/11/2022</div>
<div class="t" style="left:833.2px;top:828.5px;width:55px;text-align:center;transform:rotate(-90deg);font-size:11px;letter-spacing:-0.15px">12/12/2022</div>
<div class="t" style="left:849.0px;top:828.5px;width:55px;text-align:center;transform:rotate(-90deg);font-size:11px;letter-spacing:-0.15px">26/12/2022</div>
<div class="t" style="left:865.9px;top:828.5px;width:55px;text-align:center;transform:rotate(-90deg);font-size:11px;letter-spacing:-0.15px">10/01/2023</div>
<div class="t" style="left:882.8px;top:828.5px;width:55px;text-align:center;transform:rotate(-90deg);font-size:11px;letter-spacing:-0.15px">25/01/2023</div>
<div class="t" style="left:898.5px;top:828.5px;width:55px;text-align:center;transform:rotate(-90deg);font-size:11px;letter-spacing:-0.15px">08/02/2023</div>
<div class="t" style="left:914.2px;top:828.5px;width:55px;text-align:center;transform:rotate(-90deg);font-size:11px;letter-spacing:-0.15px">22/02/2023</div>
<div class="t" style="left:930.0px;top:828.5px;width:55px;text-align:center;transform:rotate(-90deg);font-size:11px;letter-spacing:-0.15px">08/03/2023</div>
<div class="t" style="left:946.9px;top:828.5px;width:55px;text-align:center;transform:rotate(-90deg);font-size:11px;letter-spacing:-0.15px">23/03/2023</div>
<div class="t" style="left:963.8px;top:828.5px;width:55px;text-align:center;transform:rotate(-90deg);font-size:11px;letter-spacing:-0.15px">07/04/2023</div>
<div class="t" style="left:998.6px;top:828.5px;width:55px;text-align:center;transform:rotate(-90deg);font-size:11px;letter-spacing:-0.15px">08/05/2023</div>
<div class="t" style="left:1014.4px;top:828.5px;width:55px;text-align:center;transform:rotate(-90deg);font-size:11px;letter-spacing:-0.15px">22/05/2023</div>
<div class="t" style="left:1030.1px;top:828.5px;width:55px;text-align:center;transform:rotate(-90deg);font-size:11px;letter-spacing:-0.15px">05/06/2023</div>
<div class="t" style="left:1047.0px;top:828.5px;width:55px;text-align:center;transform:rotate(-90deg);font-size:11px;letter-spacing:-0.15px">20/06/2023</div>
<div class="t" style="left:1063.9px;top:828.5px;width:55px;text-align:center;transform:rotate(-90deg);font-size:11px;letter-spacing:-0.15px">05/07/2023</div>
<div class="t" style="left:1079.6px;top:828.5px;width:55px;text-align:center;transform:rotate(-90deg);font-size:11px;letter-spacing:-0.15px">19/07/2023</div>
<div class="t" style="left:1095.4px;top:828.5px;width:55px;text-align:center;transform:rotate(-90deg);font-size:11px;letter-spacing:-0.15px">02/08/2023</div>
<div class="t" style="left:1111.1px;top:828.5px;width:55px;text-align:center;transform:rotate(-90deg);font-size:11px;letter-spacing:-0.15px">16/08/2023</div>
<div class="t" style="left:1128.0px;top:828.5px;width:55px;text-align:center;transform:rotate(-90deg);font-size:11px;letter-spacing:-0.15px">31/08/2023</div>
<div class="a" style="left:1186px;top:693px;width:1px;height:170px;background:#e4e4e4"></div>
<div class="t" style="left:1193.8px;top:703px;;letter-spacing:0.273px">Flags</div>
<div class="t" style="left:1193.8px;top:719px;font-weight:bold;letter-spacing:1.236px">TMC</div>
<div class="a" style="left:1194px;top:776px;width:13px;height:13px;background:#fff;border-top:1px solid #a0a0a0;border-left:1px solid #a0a0a0;border-right:1px solid #fff;border-bottom:1px solid #fff;box-shadow:inset 1px 1px 0 #696969, inset -1px -1px 0 #e3e3e3"></div>
<div class="t" style="left:1211.7px;top:776px;;letter-spacing:0.362px">Show values</div>
<div class="a" style="left:1194px;top:835px;width:216px;height:23px;background:#fff;border-top:1px solid #a0a0a0;border-left:1px solid #a0a0a0;border-right:1px solid #fff;border-bottom:1px solid #fff;box-shadow:inset 1px 1px 0 #696969, inset -1px -1px 0 #e3e3e3"></div>
<div class="t" style="left:1197.7px;top:840px;color:#6d6d6d;letter-spacing:0.401px">Display data field</div>
<div class="a" style="left:1393px;top:837px;width:16px;height:19px;background:#f0f0f0;border-top:1px solid #e3e3e3;border-left:1px solid #e3e3e3;border-right:1px solid #696969;border-bottom:1px solid #696969;box-shadow:inset 1px 1px 0 #fff, inset -1px -1px 0 #a0a0a0"></div>
<svg class="a" style="left:1393px;top:837px" width="16" height="19"><path d="M4 7 L11 7 L7.5 10.5 Z" fill="#a0a0a0"/></svg>
</body></html>
